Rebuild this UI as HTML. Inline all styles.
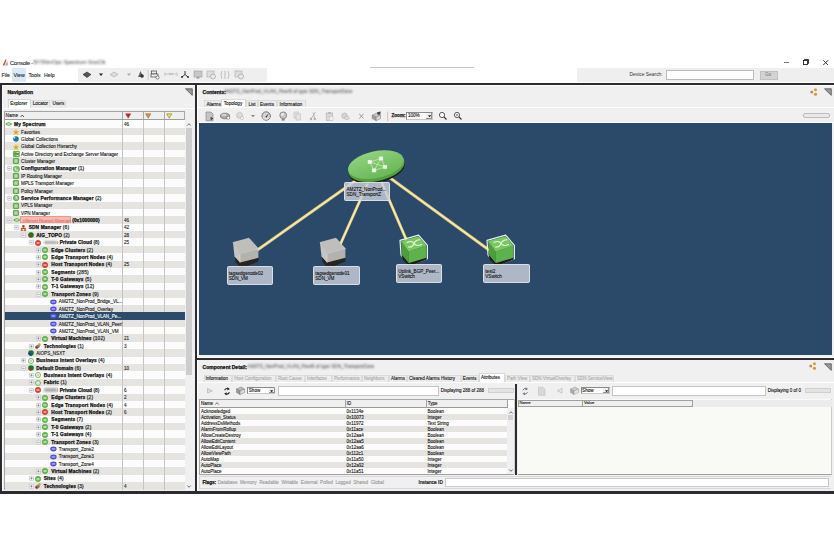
<!DOCTYPE html><html><head><meta charset="utf-8"><style>
html,body{margin:0;padding:0;width:834px;height:552px;overflow:hidden;background:#fff;}
body{position:relative;font-family:"Liberation Sans",sans-serif;color:#111;}
div{position:absolute;box-sizing:border-box;}
.t{white-space:nowrap;line-height:1;-webkit-text-stroke:0.1px currentColor;}
.t[style*="bold"]{-webkit-text-stroke:0.25px currentColor;}
.b{font-weight:bold;}
svg{position:absolute;overflow:visible;}
</style></head><body>
<svg style="left:2px;top:58.8px" width="7" height="8"><path d="M0.6 6.6 L3.4 0.4 L4.6 0.6 L2.4 6.6Z" fill="#c05a28"/><path d="M3 6.6 L5.2 1.6 L6.2 6.6Z" fill="#a8b0c8"/></svg>
<div class="t" style="left:9.8px;top:59.9px;font-size:6.2px;color:#333;letter-spacing:-0.4px">Console -</div>
<div class="t" style="left:33.5px;top:59.8px;font-size:5.4px;color:#666;filter:blur(0.9px)">BY5NmOpc Spectrum SnoClk</div>
<div style="left:784px;top:62px;width:5px;height:0.7px;background:#777"></div>
<svg style="left:803px;top:59px" width="6" height="6"><rect x="0.5" y="1.5" width="4" height="4" fill="none" stroke="#222" stroke-width="0.9"/><path d="M1.5 1.5 V0.5 H5.5 V4.5 H4.5" fill="none" stroke="#222" stroke-width="0.9"/></svg>
<svg style="left:823px;top:59.5px" width="6" height="6"><path d="M0.3 0.3 L5 5 M5 0.3 L0.3 5" stroke="#222" stroke-width="0.9"/></svg>
<div style="left:12px;top:68px;width:13.5px;height:14px;background:#d8eaf9"></div>
<div class="t" style="left:1.5px;top:73px;font-size:5.2px;color:#222">File</div>
<div class="t" style="left:13.5px;top:73px;font-size:5.2px;color:#222">View</div>
<div class="t" style="left:28.5px;top:73px;font-size:5.2px;color:#222">Tools</div>
<div class="t" style="left:44px;top:73px;font-size:5.2px;color:#222">Help</div>
<div style="left:78px;top:67.5px;width:189px;height:14px;background:#efefef"></div>
<svg style="left:0;top:0" width="834" height="90">
<path d="M83 74.5 L87 72 L91 74.5 L87 77.5Z" fill="#555" stroke="#333" stroke-width="0.6"/>
<path d="M99 73.5 H103 L101 76Z" fill="#222"/>
<path d="M110 74.5 L114 72 L118 74.5 L114 77Z" fill="#ddd" stroke="#aaa" stroke-width="0.6"/>
<path d="M127 73.5 H131 L129 76Z" fill="#aaa"/>
<path d="M138 77 L140.5 71 L143.5 77Z" fill="#666"/><circle cx="142" cy="76" r="1.8" fill="#333"/>
<rect x="147.8" y="70" width="0.7" height="10" fill="#bbb"/>
<rect x="151.5" y="71" width="5" height="3" fill="none" stroke="#444" stroke-width="0.7"/><rect x="151" y="74" width="7" height="3" fill="#eee" stroke="#444" stroke-width="0.7"/><circle cx="157.5" cy="77.5" r="1.6" fill="#fff" stroke="#444" stroke-width="0.6"/>
<path d="M165 74 H177 M165 72.5 V76 M177 72.5 V76 M169 73 L173 75 M169 75 L173 73" stroke="#bbb" stroke-width="0.8"/>
<path d="M185 71 V74.5 L182 77 M185 74.5 L188 77" stroke="#222" stroke-width="0.9" fill="none"/><circle cx="182" cy="77" r="0.9" fill="#222"/><circle cx="188" cy="77" r="0.9" fill="#222"/>
<rect x="194" y="71" width="8" height="6" fill="#c8c8c8" stroke="#999" stroke-width="0.6"/><rect x="196.5" y="77" width="3" height="1.5" fill="#999"/>
<rect x="207" y="71" width="7" height="6" fill="#ddd" stroke="#aaa" stroke-width="0.6"/><circle cx="213" cy="76.5" r="2.5" fill="#e8e8e8" stroke="#999" stroke-width="0.6"/>
<path d="M222 71 Q220 75 222 79 M228 71 Q230 75 228 79 M225 71 V79" stroke="#aaa" stroke-width="0.7" fill="none"/>
<rect x="235" y="71" width="7" height="6" fill="#ddd" stroke="#aaa" stroke-width="0.6"/><circle cx="241" cy="76.5" r="2.5" fill="#e8e8e8" stroke="#999" stroke-width="0.6"/>
</svg>
<div style="left:370px;top:67px;width:104px;height:1px;background:#c8c8c8"></div>
<div style="left:577px;top:67.5px;width:257px;height:14.5px;background:#efefef"></div>
<div class="t" style="left:629.5px;top:73px;font-size:4.9px;color:#333;-webkit-text-stroke:0">Device Search:</div>
<div style="left:665.8px;top:70px;width:88px;height:10.3px;background:#fff;border:0.7px solid #bbb"></div>
<div style="left:759.7px;top:71.2px;width:18.2px;height:8.4px;background:#d3d3d3;border:0.7px solid #c0c0c0"></div>
<div class="t" style="left:765px;top:73.3px;font-size:4.6px;color:#888">Go</div>
<div style="left:0px;top:82.8px;width:834px;height:2px;background:#2c2c30"></div>
<div style="left:0px;top:82.8px;width:2px;height:411px;background:#2c2c30"></div>
<div style="left:0px;top:491px;width:834px;height:2.6px;background:#2c2c30"></div>
<div style="left:2px;top:84.8px;width:193px;height:406.2px;background:#f0f0f0"></div>
<div style="left:2px;top:84.8px;width:193px;height:1px;background:#fff"></div>
<div style="left:2px;top:84.8px;width:1px;height:406px;background:#fff"></div>
<div style="left:195px;top:82.8px;width:2px;height:411px;background:#2c2c30"></div>
<div style="left:197px;top:84.8px;width:637px;height:272px;background:#f0f0f0"></div>
<div style="left:197px;top:84.8px;width:637px;height:1px;background:#fff"></div>
<div style="left:197px;top:84.8px;width:1px;height:272px;background:#fff"></div>
<div style="left:197px;top:357.5px;width:637px;height:2.5px;background:#2c2c30"></div>
<div style="left:197px;top:360px;width:637px;height:131px;background:#f0f0f0"></div>
<div style="left:197px;top:360px;width:1px;height:131px;background:#fff"></div>
<div class="t" style="left:7.5px;top:90.2px;font-size:5px;font-weight:bold;color:#111">Navigation</div>
<svg style="left:185px;top:88px" width="8" height="8"><path d="M0.5 0.8 L7.3 0.8 L7.3 7.4Z" fill="#999" stroke="#555" stroke-width="0.8" stroke-linejoin="round"/></svg>
<div style="left:8px;top:98.7px;width:22.7px;height:9.4px;background:#fff;border:0.6px solid #d8d8d8;border-bottom:none"></div>
<div style="left:30.7px;top:99.5px;width:35.8px;height:8.3px;background:#ebebeb;border-top:0.6px solid #dedede;border-right:0.6px solid #dedede"></div>
<div style="left:49px;top:99.5px;width:0.6px;height:8.3px;background:#dedede"></div>
<div class="t" style="left:10.2px;top:101.8px;font-size:4.6px;">Explorer</div>
<div class="t" style="left:32.8px;top:102.3px;font-size:4.6px;">Locator</div>
<div class="t" style="left:52.4px;top:102.3px;font-size:4.6px;">Users</div>
<div style="left:3px;top:107.8px;width:192px;height:1px;background:#fff"></div>
<div style="left:4px;top:111px;width:181px;height:379px;background:#fcfcfc"></div>
<div style="left:4px;top:111px;width:189px;height:1px;background:#a4a4a4"></div>
<div style="left:192px;top:111px;width:1px;height:379px;background:#c8c8c8"></div>
<div style="left:4px;top:111px;width:1px;height:379px;background:#a4a4a4"></div>
<div style="left:5px;top:112px;width:180px;height:7px;background:#efefef"></div>
<div style="left:4px;top:119px;width:181px;height:1px;background:#9c9c9c"></div>
<div style="left:4px;top:489px;width:189px;height:1px;background:#b8b8b8"></div>
<div class="t" style="left:5.5px;top:114.2px;font-size:4.7px;">Name</div>
<svg style="left:19.5px;top:114px" width="5" height="4"><path d="M0.5 3 L2.2 1 L3.9 3" fill="none" stroke="#333" stroke-width="0.8"/></svg>
<div style="left:122px;top:112px;width:1px;height:7px;background:#a8a8a8"></div>
<div style="left:143px;top:112px;width:1px;height:7px;background:#a8a8a8"></div>
<div style="left:164px;top:112px;width:1px;height:7px;background:#a8a8a8"></div>
<div style="left:184px;top:112px;width:1px;height:7px;background:#a8a8a8"></div>
<svg style="left:124.6px;top:113.3px" width="7" height="6"><path d="M0.6 0.8 H5.8 L3.2 5.2Z" fill="#e01818" stroke="#7a5a40" stroke-width="0.5" stroke-linejoin="round"/></svg>
<svg style="left:145.2px;top:113.3px" width="7" height="6"><path d="M0.6 0.8 H5.8 L3.2 5.2Z" fill="#f09028" stroke="#7a5a40" stroke-width="0.5" stroke-linejoin="round"/></svg>
<svg style="left:166.2px;top:113.3px" width="7" height="6"><path d="M0.6 0.8 H5.8 L3.2 5.2Z" fill="#f0e830" stroke="#7a5a40" stroke-width="0.5" stroke-linejoin="round"/></svg>
<div style="left:4.8px;top:120.3px;width:180px;height:7.435px;background:#fcfcfc"></div>
<div style="left:122px;top:120.3px;width:1px;height:7.435px;background:#c4c4c4"></div>
<div style="left:143px;top:120.3px;width:1px;height:7.435px;background:#c4c4c4"></div>
<div style="left:164px;top:120.3px;width:1px;height:7.435px;background:#c4c4c4"></div>
<svg style="left:5px;top:121.39999999999999px" width="8" height="6"><path d="M0.2 3 Q3.7 -0.6 7.4 3 Q3.7 6.6 0.2 3Z" fill="#4aaa3a"/><ellipse cx="3.8" cy="3" rx="1.9" ry="1.1" fill="#b8e4a8"/></svg>
<div class="t" style="left:14px;top:123.0px;font-size:4.8px;font-weight:bold;letter-spacing:0.14px;color:#111;clip-path:inset(-4px 0 -4px -4px);width:108.3px">My Spectrum</div>
<div class="t" style="left:124px;top:123.0px;font-size:4.6px;color:#222">46</div>
<div style="left:4.8px;top:127.685px;width:180px;height:7.435px;background:#e5e4e0"></div>
<div style="left:122px;top:127.685px;width:1px;height:7.435px;background:#c4c4c4"></div>
<div style="left:143px;top:127.685px;width:1px;height:7.435px;background:#c4c4c4"></div>
<div style="left:164px;top:127.685px;width:1px;height:7.435px;background:#c4c4c4"></div>
<svg style="left:12.7px;top:128.785px" width="6" height="6"><path d="M3 0.2 L3.8 2.2 L5.8 2.3 L4.3 3.6 L4.8 5.8 L3 4.6 L1.2 5.8 L1.7 3.6 L0.2 2.3 L2.2 2.2Z" fill="#f4d020" stroke="#c09010" stroke-width="0.3"/><circle cx="3" cy="3.3" r="0.9" fill="#e07020"/></svg>
<div class="t" style="left:21.1px;top:130.535px;font-size:4.6px;color:#111;clip-path:inset(-4px 0 -4px -4px);width:101.19999999999999px">Favorites</div>
<div style="left:4.8px;top:135.07px;width:180px;height:7.435px;background:#fcfcfc"></div>
<div style="left:122px;top:135.07px;width:1px;height:7.435px;background:#c4c4c4"></div>
<div style="left:143px;top:135.07px;width:1px;height:7.435px;background:#c4c4c4"></div>
<div style="left:164px;top:135.07px;width:1px;height:7.435px;background:#c4c4c4"></div>
<svg style="left:12.7px;top:136.17px" width="6" height="6"><circle cx="3" cy="3" r="2.8" fill="#2a6ad0"/><path d="M1.6 1 Q3.6 0.6 4.6 2.2 Q5.4 4 3.8 5.4 Q3 3.6 1.8 3.4Z" fill="#1a8a3a"/><circle cx="1.6" cy="1.8" r="0.8" fill="#e8f0ff"/></svg>
<div class="t" style="left:21.1px;top:137.92px;font-size:4.6px;color:#111;clip-path:inset(-4px 0 -4px -4px);width:101.19999999999999px">Global Collections</div>
<div style="left:4.8px;top:142.45499999999998px;width:180px;height:7.435px;background:#e5e4e0"></div>
<div style="left:122px;top:142.45499999999998px;width:1px;height:7.435px;background:#c4c4c4"></div>
<div style="left:143px;top:142.45499999999998px;width:1px;height:7.435px;background:#c4c4c4"></div>
<div style="left:164px;top:142.45499999999998px;width:1px;height:7.435px;background:#c4c4c4"></div>
<svg style="left:12.7px;top:143.55499999999998px" width="6" height="6"><path d="M3 0.2 L3.8 2.2 L5.8 2.3 L4.3 3.6 L4.8 5.8 L3 4.6 L1.2 5.8 L1.7 3.6 L0.2 2.3 L2.2 2.2Z" fill="#f4d020" stroke="#c09010" stroke-width="0.3"/><circle cx="3" cy="3.3" r="0.9" fill="#e07020"/></svg>
<div class="t" style="left:21.1px;top:145.30499999999998px;font-size:4.6px;color:#111;clip-path:inset(-4px 0 -4px -4px);width:101.19999999999999px">Global Collection Hierarchy</div>
<div style="left:4.8px;top:149.84px;width:180px;height:7.435px;background:#fcfcfc"></div>
<div style="left:122px;top:149.84px;width:1px;height:7.435px;background:#c4c4c4"></div>
<div style="left:143px;top:149.84px;width:1px;height:7.435px;background:#c4c4c4"></div>
<div style="left:164px;top:149.84px;width:1px;height:7.435px;background:#c4c4c4"></div>
<svg style="left:12.7px;top:150.94px" width="7" height="6"><rect x="0.4" y="0.3" width="6" height="2.6" rx="0.5" fill="#6cbc58" stroke="#3a7a2a" stroke-width="0.5"/><rect x="0.4" y="3.1" width="6" height="2.6" rx="0.5" fill="#6cbc58" stroke="#3a7a2a" stroke-width="0.5"/><rect x="3.6" y="1.2" width="2" height="0.8" fill="#e8f8e0"/><rect x="3.6" y="4" width="2" height="0.8" fill="#e8f8e0"/></svg>
<div class="t" style="left:21.1px;top:152.69px;font-size:4.6px;color:#111;clip-path:inset(-4px 0 -4px -4px);width:101.19999999999999px">Active Directory and Exchange Server Manager</div>
<div style="left:4.8px;top:157.225px;width:180px;height:7.435px;background:#e5e4e0"></div>
<div style="left:122px;top:157.225px;width:1px;height:7.435px;background:#c4c4c4"></div>
<div style="left:143px;top:157.225px;width:1px;height:7.435px;background:#c4c4c4"></div>
<div style="left:164px;top:157.225px;width:1px;height:7.435px;background:#c4c4c4"></div>
<svg style="left:12.7px;top:158.325px" width="6" height="6"><rect x="0.4" y="0.4" width="5.2" height="5.2" rx="0.6" fill="#6cbc58" stroke="#3a7a2a" stroke-width="0.6"/><rect x="1.4" y="1.6" width="3.2" height="1" fill="#dff4d4"/><rect x="1.4" y="3.4" width="3.2" height="1" fill="#dff4d4"/></svg>
<div class="t" style="left:21.1px;top:160.075px;font-size:4.6px;color:#111;clip-path:inset(-4px 0 -4px -4px);width:101.19999999999999px">Cluster Manager</div>
<div style="left:4.8px;top:164.61px;width:180px;height:7.435px;background:#fcfcfc"></div>
<div style="left:122px;top:164.61px;width:1px;height:7.435px;background:#c4c4c4"></div>
<div style="left:143px;top:164.61px;width:1px;height:7.435px;background:#c4c4c4"></div>
<div style="left:164px;top:164.61px;width:1px;height:7.435px;background:#c4c4c4"></div>
<svg style="left:6.9px;top:166.31px" width="5" height="5"><rect x="0.35" y="0.35" width="4.2" height="4" rx="0.7" fill="#f7f7f9" stroke="#bcc0cc" stroke-width="0.7"/><path d="M1.35 2.35 H3.55" stroke="#666" stroke-width="0.6"/></svg>
<svg style="left:12.7px;top:165.71px" width="7" height="6"><rect x="0.4" y="0.4" width="6" height="5.2" rx="1.5" fill="#7cc86a" stroke="#3a8a2a" stroke-width="0.5"/><path d="M2 1.5 Q1.5 4.5 5 4.5" stroke="#e8f8e0" stroke-width="0.9" fill="none"/></svg>
<div class="t" style="left:21.1px;top:167.31px;font-size:4.8px;font-weight:bold;letter-spacing:0.14px;color:#111;clip-path:inset(-4px 0 -4px -4px);width:101.19999999999999px">Configuration Manager <span style="font-weight:normal;color:#333">(1)</span></div>
<div style="left:4.8px;top:171.995px;width:180px;height:7.435px;background:#e5e4e0"></div>
<div style="left:122px;top:171.995px;width:1px;height:7.435px;background:#c4c4c4"></div>
<div style="left:143px;top:171.995px;width:1px;height:7.435px;background:#c4c4c4"></div>
<div style="left:164px;top:171.995px;width:1px;height:7.435px;background:#c4c4c4"></div>
<svg style="left:12.7px;top:173.095px" width="6" height="6"><rect x="0.4" y="0.4" width="5.2" height="5.2" rx="0.6" fill="#6cbc58" stroke="#3a7a2a" stroke-width="0.6"/><rect x="1.4" y="1.6" width="3.2" height="1" fill="#dff4d4"/><rect x="1.4" y="3.4" width="3.2" height="1" fill="#dff4d4"/></svg>
<div class="t" style="left:21.1px;top:174.845px;font-size:4.6px;color:#111;clip-path:inset(-4px 0 -4px -4px);width:101.19999999999999px">IP Routing Manager</div>
<div style="left:4.8px;top:179.38px;width:180px;height:7.435px;background:#fcfcfc"></div>
<div style="left:122px;top:179.38px;width:1px;height:7.435px;background:#c4c4c4"></div>
<div style="left:143px;top:179.38px;width:1px;height:7.435px;background:#c4c4c4"></div>
<div style="left:164px;top:179.38px;width:1px;height:7.435px;background:#c4c4c4"></div>
<svg style="left:12.7px;top:180.48px" width="6" height="6"><rect x="0.4" y="0.4" width="5.2" height="5.2" rx="0.6" fill="#6cbc58" stroke="#3a7a2a" stroke-width="0.6"/><rect x="1.4" y="1.6" width="3.2" height="1" fill="#dff4d4"/><rect x="1.4" y="3.4" width="3.2" height="1" fill="#dff4d4"/></svg>
<div class="t" style="left:21.1px;top:182.23px;font-size:4.6px;color:#111;clip-path:inset(-4px 0 -4px -4px);width:101.19999999999999px">MPLS Transport Manager</div>
<div style="left:4.8px;top:186.765px;width:180px;height:7.435px;background:#e5e4e0"></div>
<div style="left:122px;top:186.765px;width:1px;height:7.435px;background:#c4c4c4"></div>
<div style="left:143px;top:186.765px;width:1px;height:7.435px;background:#c4c4c4"></div>
<div style="left:164px;top:186.765px;width:1px;height:7.435px;background:#c4c4c4"></div>
<svg style="left:12.7px;top:187.86499999999998px" width="6" height="6"><rect x="0.4" y="0.4" width="5.2" height="5.2" rx="0.6" fill="#6cbc58" stroke="#3a7a2a" stroke-width="0.6"/><rect x="1.4" y="1.6" width="3.2" height="1" fill="#dff4d4"/><rect x="1.4" y="3.4" width="3.2" height="1" fill="#dff4d4"/></svg>
<div class="t" style="left:21.1px;top:189.61499999999998px;font-size:4.6px;color:#111;clip-path:inset(-4px 0 -4px -4px);width:101.19999999999999px">Policy Manager</div>
<div style="left:4.8px;top:194.14999999999998px;width:180px;height:7.435px;background:#fcfcfc"></div>
<div style="left:122px;top:194.14999999999998px;width:1px;height:7.435px;background:#c4c4c4"></div>
<div style="left:143px;top:194.14999999999998px;width:1px;height:7.435px;background:#c4c4c4"></div>
<div style="left:164px;top:194.14999999999998px;width:1px;height:7.435px;background:#c4c4c4"></div>
<svg style="left:6.9px;top:195.84999999999997px" width="5" height="5"><rect x="0.35" y="0.35" width="4.2" height="4" rx="0.7" fill="#f7f7f9" stroke="#bcc0cc" stroke-width="0.7"/><path d="M1.35 2.35 H3.55" stroke="#666" stroke-width="0.6"/></svg>
<svg style="left:12.7px;top:195.24999999999997px" width="7" height="6"><circle cx="3.2" cy="3" r="2.8" fill="#7cc86a" stroke="#2a6a2a" stroke-width="0.5"/><path d="M3.2 1.2 V3 L4.5 4" stroke="#fff" stroke-width="0.7" fill="none"/></svg>
<div class="t" style="left:21.1px;top:196.84999999999997px;font-size:4.8px;font-weight:bold;letter-spacing:0.14px;color:#111;clip-path:inset(-4px 0 -4px -4px);width:101.19999999999999px">Service Performance Manager <span style="font-weight:normal;color:#333">(2)</span></div>
<div style="left:4.8px;top:201.535px;width:180px;height:7.435px;background:#e5e4e0"></div>
<div style="left:122px;top:201.535px;width:1px;height:7.435px;background:#c4c4c4"></div>
<div style="left:143px;top:201.535px;width:1px;height:7.435px;background:#c4c4c4"></div>
<div style="left:164px;top:201.535px;width:1px;height:7.435px;background:#c4c4c4"></div>
<svg style="left:12.7px;top:202.635px" width="6" height="6"><rect x="0.4" y="0.4" width="5.2" height="5.2" rx="0.6" fill="#6cbc58" stroke="#3a7a2a" stroke-width="0.6"/><rect x="1.4" y="1.6" width="3.2" height="1" fill="#dff4d4"/><rect x="1.4" y="3.4" width="3.2" height="1" fill="#dff4d4"/></svg>
<div class="t" style="left:21.1px;top:204.385px;font-size:4.6px;color:#111;clip-path:inset(-4px 0 -4px -4px);width:101.19999999999999px">VPLS Manager</div>
<div style="left:4.8px;top:208.92000000000002px;width:180px;height:7.435px;background:#fcfcfc"></div>
<div style="left:122px;top:208.92000000000002px;width:1px;height:7.435px;background:#c4c4c4"></div>
<div style="left:143px;top:208.92000000000002px;width:1px;height:7.435px;background:#c4c4c4"></div>
<div style="left:164px;top:208.92000000000002px;width:1px;height:7.435px;background:#c4c4c4"></div>
<svg style="left:12.7px;top:210.02px" width="6" height="6"><rect x="0.4" y="0.4" width="5.2" height="5.2" rx="0.6" fill="#6cbc58" stroke="#3a7a2a" stroke-width="0.6"/><rect x="1.4" y="1.6" width="3.2" height="1" fill="#dff4d4"/><rect x="1.4" y="3.4" width="3.2" height="1" fill="#dff4d4"/></svg>
<div class="t" style="left:21.1px;top:211.77px;font-size:4.6px;color:#111;clip-path:inset(-4px 0 -4px -4px);width:101.19999999999999px">VPN Manager</div>
<div style="left:4.8px;top:216.305px;width:180px;height:7.435px;background:#e5e4e0"></div>
<div style="left:122px;top:216.305px;width:1px;height:7.435px;background:#c4c4c4"></div>
<div style="left:143px;top:216.305px;width:1px;height:7.435px;background:#c4c4c4"></div>
<div style="left:164px;top:216.305px;width:1px;height:7.435px;background:#c4c4c4"></div>
<svg style="left:6.9px;top:218.005px" width="5" height="5"><rect x="0.35" y="0.35" width="4.2" height="4" rx="0.7" fill="#f7f7f9" stroke="#bcc0cc" stroke-width="0.7"/><path d="M1.35 2.35 H3.55" stroke="#666" stroke-width="0.6"/></svg>
<svg style="left:12.7px;top:217.405px" width="8" height="6"><path d="M0.2 3 Q3.7 -0.6 7.4 3 Q3.7 6.6 0.2 3Z" fill="#4aaa3a"/><ellipse cx="3.8" cy="3" rx="1.9" ry="1.1" fill="#b8e4a8"/></svg>
<div style="left:19.7px;top:216.005px;width:51.8px;height:6.6px;background:#f7bab2;border:0.6px solid #ee968c"></div>
<div class="t" style="left:23px;top:218.60500000000002px;font-size:4.4px;color:#e06a64;filter:blur(0.6px)">vServer Nsmsrt Kknmgrt</div>
<div class="t" style="left:72.3px;top:219.005px;font-size:4.8px;font-weight:bold;color:#111">(0x1000000)</div>
<div class="t" style="left:124px;top:219.005px;font-size:4.6px;color:#222">46</div>
<div style="left:4.8px;top:223.69px;width:180px;height:7.435px;background:#fcfcfc"></div>
<div style="left:122px;top:223.69px;width:1px;height:7.435px;background:#c4c4c4"></div>
<div style="left:143px;top:223.69px;width:1px;height:7.435px;background:#c4c4c4"></div>
<div style="left:164px;top:223.69px;width:1px;height:7.435px;background:#c4c4c4"></div>
<svg style="left:14.100000000000001px;top:225.39px" width="5" height="5"><rect x="0.35" y="0.35" width="4.2" height="4" rx="0.7" fill="#f7f7f9" stroke="#bcc0cc" stroke-width="0.7"/><path d="M1.35 2.35 H3.55" stroke="#666" stroke-width="0.6"/></svg>
<svg style="left:20.1px;top:224.79px" width="7" height="7"><circle cx="3.4" cy="1.3" r="1.2" fill="#a83818"/><path d="M1.6 4 Q2 2.2 3.4 2.4 Q4.8 2.2 5.2 4Z" fill="#b84a28"/><circle cx="1.8" cy="3.8" r="1.1" fill="#c05030"/><circle cx="5" cy="3.8" r="1.1" fill="#c05030"/><path d="M0.2 6.4 Q0.4 4.6 1.8 4.8 Q3.2 4.6 3.4 6.4Z M3.4 6.4 Q3.6 4.6 5 4.8 Q6.4 4.6 6.6 6.4Z" fill="#c86040"/></svg>
<div class="t" style="left:28.650000000000002px;top:226.39px;font-size:4.8px;font-weight:bold;letter-spacing:0.14px;color:#111;clip-path:inset(-4px 0 -4px -4px);width:93.64999999999999px">SDN Manager <span style="font-weight:normal;color:#333">(6)</span></div>
<div class="t" style="left:124px;top:226.39px;font-size:4.6px;color:#222">42</div>
<div style="left:4.8px;top:231.075px;width:180px;height:7.435px;background:#e5e4e0"></div>
<div style="left:122px;top:231.075px;width:1px;height:7.435px;background:#c4c4c4"></div>
<div style="left:143px;top:231.075px;width:1px;height:7.435px;background:#c4c4c4"></div>
<div style="left:164px;top:231.075px;width:1px;height:7.435px;background:#c4c4c4"></div>
<svg style="left:21.3px;top:232.77499999999998px" width="5" height="5"><rect x="0.35" y="0.35" width="4.2" height="4" rx="0.7" fill="#f7f7f9" stroke="#bcc0cc" stroke-width="0.7"/><path d="M1.35 2.35 H3.55" stroke="#666" stroke-width="0.6"/></svg>
<svg style="left:27.5px;top:232.17499999999998px" width="6" height="6"><circle cx="3" cy="3" r="2.8" fill="#127a22"/><path d="M0.4 3.2 A2.8 2.8 0 0 0 3 5.8 L3 3.6 Q1.8 2.6 0.4 3.2Z" fill="#d02020"/></svg>
<div class="t" style="left:36.2px;top:233.77499999999998px;font-size:4.8px;font-weight:bold;letter-spacing:0.14px;color:#111;clip-path:inset(-4px 0 -4px -4px);width:86.1px">AIG_TOPO <span style="font-weight:normal;color:#333">(2)</span></div>
<div class="t" style="left:124px;top:233.77499999999998px;font-size:4.6px;color:#222">28</div>
<div style="left:4.8px;top:238.45999999999998px;width:180px;height:7.435px;background:#fcfcfc"></div>
<div style="left:122px;top:238.45999999999998px;width:1px;height:7.435px;background:#c4c4c4"></div>
<div style="left:143px;top:238.45999999999998px;width:1px;height:7.435px;background:#c4c4c4"></div>
<div style="left:164px;top:238.45999999999998px;width:1px;height:7.435px;background:#c4c4c4"></div>
<svg style="left:28.5px;top:240.15999999999997px" width="5" height="5"><rect x="0.35" y="0.35" width="4.2" height="4" rx="0.7" fill="#f7f7f9" stroke="#bcc0cc" stroke-width="0.7"/><path d="M1.35 2.35 H3.55" stroke="#666" stroke-width="0.6"/></svg>
<svg style="left:34.900000000000006px;top:239.55999999999997px" width="6" height="6"><circle cx="3" cy="3" r="2.75" fill="#e0402e" stroke="#b02818" stroke-width="0.4"/><rect x="1.5" y="2.45" width="3" height="1.1" fill="#fbe0d8"/></svg>
<div style="left:44.25px;top:240.65999999999997px;width:12.5px;height:3.8px;background:#a8a8a8;filter:blur(1px);border-radius:1px"></div>
<div style="left:56.95px;top:240.65999999999997px;width:1.2px;height:3.6px;background:#b0b0b0;filter:blur(0.4px)"></div>
<div class="t" style="left:59.75px;top:241.15999999999997px;font-size:4.8px;font-weight:bold;letter-spacing:0.1px;color:#111">Private Cloud <span style="font-weight:normal;color:#333">(8)</span></div>
<div class="t" style="left:124px;top:241.15999999999997px;font-size:4.6px;color:#222">25</div>
<div style="left:4.8px;top:245.845px;width:180px;height:7.435px;background:#e5e4e0"></div>
<div style="left:122px;top:245.845px;width:1px;height:7.435px;background:#c4c4c4"></div>
<div style="left:143px;top:245.845px;width:1px;height:7.435px;background:#c4c4c4"></div>
<div style="left:164px;top:245.845px;width:1px;height:7.435px;background:#c4c4c4"></div>
<svg style="left:35.7px;top:247.545px" width="5" height="5"><rect x="0.35" y="0.35" width="4.2" height="4" rx="0.7" fill="#f7f7f9" stroke="#bcc0cc" stroke-width="0.7"/><path d="M1.35 2.35 H3.55" stroke="#666" stroke-width="0.6"/><path d="M2.45 1.25 V3.45" stroke="#666" stroke-width="0.6"/></svg>
<svg style="left:42.3px;top:246.945px" width="6" height="6"><circle cx="3" cy="3" r="2.75" fill="#62bc4e" stroke="#3a8a2a" stroke-width="0.4"/><rect x="1.5" y="2.45" width="3" height="1.1" fill="#eafbe0"/></svg>
<div class="t" style="left:51.3px;top:248.545px;font-size:4.8px;font-weight:bold;letter-spacing:0.14px;color:#111;clip-path:inset(-4px 0 -4px -4px);width:71.0px">Edge Clusters <span style="font-weight:normal;color:#333">(2)</span></div>
<div style="left:4.8px;top:253.23000000000002px;width:180px;height:7.435px;background:#fcfcfc"></div>
<div style="left:122px;top:253.23000000000002px;width:1px;height:7.435px;background:#c4c4c4"></div>
<div style="left:143px;top:253.23000000000002px;width:1px;height:7.435px;background:#c4c4c4"></div>
<div style="left:164px;top:253.23000000000002px;width:1px;height:7.435px;background:#c4c4c4"></div>
<svg style="left:35.7px;top:254.93px" width="5" height="5"><rect x="0.35" y="0.35" width="4.2" height="4" rx="0.7" fill="#f7f7f9" stroke="#bcc0cc" stroke-width="0.7"/><path d="M1.35 2.35 H3.55" stroke="#666" stroke-width="0.6"/><path d="M2.45 1.25 V3.45" stroke="#666" stroke-width="0.6"/></svg>
<svg style="left:42.3px;top:254.33px" width="6" height="6"><circle cx="3" cy="3" r="2.75" fill="#62bc4e" stroke="#3a8a2a" stroke-width="0.4"/><rect x="1.5" y="2.45" width="3" height="1.1" fill="#eafbe0"/></svg>
<div class="t" style="left:51.3px;top:255.93px;font-size:4.8px;font-weight:bold;letter-spacing:0.14px;color:#111;clip-path:inset(-4px 0 -4px -4px);width:71.0px">Edge Transport Nodes <span style="font-weight:normal;color:#333">(4)</span></div>
<div style="left:4.8px;top:260.615px;width:180px;height:7.435px;background:#e5e4e0"></div>
<div style="left:122px;top:260.615px;width:1px;height:7.435px;background:#c4c4c4"></div>
<div style="left:143px;top:260.615px;width:1px;height:7.435px;background:#c4c4c4"></div>
<div style="left:164px;top:260.615px;width:1px;height:7.435px;background:#c4c4c4"></div>
<svg style="left:35.7px;top:262.315px" width="5" height="5"><rect x="0.35" y="0.35" width="4.2" height="4" rx="0.7" fill="#f7f7f9" stroke="#bcc0cc" stroke-width="0.7"/><path d="M1.35 2.35 H3.55" stroke="#666" stroke-width="0.6"/><path d="M2.45 1.25 V3.45" stroke="#666" stroke-width="0.6"/></svg>
<svg style="left:42.3px;top:261.71500000000003px" width="6" height="6"><circle cx="3" cy="3" r="2.75" fill="#e0402e" stroke="#b02818" stroke-width="0.4"/><rect x="1.5" y="2.45" width="3" height="1.1" fill="#fbe0d8"/></svg>
<div class="t" style="left:51.3px;top:263.315px;font-size:4.8px;font-weight:bold;letter-spacing:0.14px;color:#111;clip-path:inset(-4px 0 -4px -4px);width:71.0px">Host Transport Nodes <span style="font-weight:normal;color:#333">(4)</span></div>
<div class="t" style="left:124px;top:263.315px;font-size:4.6px;color:#222">25</div>
<div style="left:4.8px;top:268.0px;width:180px;height:7.435px;background:#fcfcfc"></div>
<div style="left:122px;top:268.0px;width:1px;height:7.435px;background:#c4c4c4"></div>
<div style="left:143px;top:268.0px;width:1px;height:7.435px;background:#c4c4c4"></div>
<div style="left:164px;top:268.0px;width:1px;height:7.435px;background:#c4c4c4"></div>
<svg style="left:35.7px;top:269.7px" width="5" height="5"><rect x="0.35" y="0.35" width="4.2" height="4" rx="0.7" fill="#f7f7f9" stroke="#bcc0cc" stroke-width="0.7"/><path d="M1.35 2.35 H3.55" stroke="#666" stroke-width="0.6"/><path d="M2.45 1.25 V3.45" stroke="#666" stroke-width="0.6"/></svg>
<svg style="left:42.3px;top:269.1px" width="6" height="6"><circle cx="3" cy="3" r="2.75" fill="#62bc4e" stroke="#3a8a2a" stroke-width="0.4"/><rect x="1.5" y="2.45" width="3" height="1.1" fill="#eafbe0"/></svg>
<div class="t" style="left:51.3px;top:270.7px;font-size:4.8px;font-weight:bold;letter-spacing:0.14px;color:#111;clip-path:inset(-4px 0 -4px -4px);width:71.0px">Segments <span style="font-weight:normal;color:#333">(285)</span></div>
<div style="left:4.8px;top:275.385px;width:180px;height:7.435px;background:#e5e4e0"></div>
<div style="left:122px;top:275.385px;width:1px;height:7.435px;background:#c4c4c4"></div>
<div style="left:143px;top:275.385px;width:1px;height:7.435px;background:#c4c4c4"></div>
<div style="left:164px;top:275.385px;width:1px;height:7.435px;background:#c4c4c4"></div>
<svg style="left:35.7px;top:277.085px" width="5" height="5"><rect x="0.35" y="0.35" width="4.2" height="4" rx="0.7" fill="#f7f7f9" stroke="#bcc0cc" stroke-width="0.7"/><path d="M1.35 2.35 H3.55" stroke="#666" stroke-width="0.6"/><path d="M2.45 1.25 V3.45" stroke="#666" stroke-width="0.6"/></svg>
<svg style="left:42.3px;top:276.485px" width="6" height="6"><circle cx="3" cy="3" r="2.75" fill="#62bc4e" stroke="#3a8a2a" stroke-width="0.4"/><rect x="1.5" y="2.45" width="3" height="1.1" fill="#eafbe0"/></svg>
<div class="t" style="left:51.3px;top:278.085px;font-size:4.8px;font-weight:bold;letter-spacing:0.14px;color:#111;clip-path:inset(-4px 0 -4px -4px);width:71.0px">T-0 Gateways <span style="font-weight:normal;color:#333">(5)</span></div>
<div style="left:4.8px;top:282.77px;width:180px;height:7.435px;background:#fcfcfc"></div>
<div style="left:122px;top:282.77px;width:1px;height:7.435px;background:#c4c4c4"></div>
<div style="left:143px;top:282.77px;width:1px;height:7.435px;background:#c4c4c4"></div>
<div style="left:164px;top:282.77px;width:1px;height:7.435px;background:#c4c4c4"></div>
<svg style="left:35.7px;top:284.46999999999997px" width="5" height="5"><rect x="0.35" y="0.35" width="4.2" height="4" rx="0.7" fill="#f7f7f9" stroke="#bcc0cc" stroke-width="0.7"/><path d="M1.35 2.35 H3.55" stroke="#666" stroke-width="0.6"/><path d="M2.45 1.25 V3.45" stroke="#666" stroke-width="0.6"/></svg>
<svg style="left:42.3px;top:283.87px" width="6" height="6"><circle cx="3" cy="3" r="2.75" fill="#62bc4e" stroke="#3a8a2a" stroke-width="0.4"/><rect x="1.5" y="2.45" width="3" height="1.1" fill="#eafbe0"/></svg>
<div class="t" style="left:51.3px;top:285.46999999999997px;font-size:4.8px;font-weight:bold;letter-spacing:0.14px;color:#111;clip-path:inset(-4px 0 -4px -4px);width:71.0px">T-1 Gateways <span style="font-weight:normal;color:#333">(12)</span></div>
<div style="left:4.8px;top:290.155px;width:180px;height:7.435px;background:#e5e4e0"></div>
<div style="left:122px;top:290.155px;width:1px;height:7.435px;background:#c4c4c4"></div>
<div style="left:143px;top:290.155px;width:1px;height:7.435px;background:#c4c4c4"></div>
<div style="left:164px;top:290.155px;width:1px;height:7.435px;background:#c4c4c4"></div>
<svg style="left:35.7px;top:291.85499999999996px" width="5" height="5"><rect x="0.35" y="0.35" width="4.2" height="4" rx="0.7" fill="#f7f7f9" stroke="#bcc0cc" stroke-width="0.7"/><path d="M1.35 2.35 H3.55" stroke="#666" stroke-width="0.6"/></svg>
<svg style="left:42.3px;top:291.255px" width="6" height="6"><circle cx="3" cy="3" r="2.75" fill="#62bc4e" stroke="#3a8a2a" stroke-width="0.4"/><rect x="1.5" y="2.45" width="3" height="1.1" fill="#eafbe0"/></svg>
<div class="t" style="left:51.3px;top:292.85499999999996px;font-size:4.8px;font-weight:bold;letter-spacing:0.14px;color:#111;clip-path:inset(-4px 0 -4px -4px);width:71.0px">Transport Zones <span style="font-weight:normal;color:#333">(9)</span></div>
<div style="left:4.8px;top:297.54px;width:180px;height:7.435px;background:#fcfcfc"></div>
<div style="left:122px;top:297.54px;width:1px;height:7.435px;background:#c4c4c4"></div>
<div style="left:143px;top:297.54px;width:1px;height:7.435px;background:#c4c4c4"></div>
<div style="left:164px;top:297.54px;width:1px;height:7.435px;background:#c4c4c4"></div>
<svg style="left:49.7px;top:298.64000000000004px" width="7" height="6"><ellipse cx="3.4" cy="3" rx="3.2" ry="2.4" fill="#5050d8"/><rect x="1.6" y="2.5" width="3.6" height="0.9" fill="#e0e0ff"/></svg>
<div class="t" style="left:58.85px;top:300.39px;font-size:4.6px;color:#111;clip-path:inset(-4px 0 -4px -4px);width:63.449999999999996px">AM2TZ_NonProd_Bridge_VL...</div>
<div style="left:4.8px;top:304.925px;width:180px;height:7.435px;background:#e5e4e0"></div>
<div style="left:122px;top:304.925px;width:1px;height:7.435px;background:#c4c4c4"></div>
<div style="left:143px;top:304.925px;width:1px;height:7.435px;background:#c4c4c4"></div>
<div style="left:164px;top:304.925px;width:1px;height:7.435px;background:#c4c4c4"></div>
<svg style="left:49.7px;top:306.02500000000003px" width="7" height="6"><ellipse cx="3.4" cy="3" rx="3.2" ry="2.4" fill="#5050d8"/><rect x="1.6" y="2.5" width="3.6" height="0.9" fill="#e0e0ff"/></svg>
<div class="t" style="left:58.85px;top:307.775px;font-size:4.6px;color:#111;clip-path:inset(-4px 0 -4px -4px);width:63.449999999999996px">AM2TZ_NonProd_Overlay</div>
<div style="left:4.8px;top:312.31px;width:180px;height:7.435px;background:#2d4b6d"></div>
<div style="left:122px;top:312.31px;width:1px;height:7.435px;background:#2d4b6d"></div>
<div style="left:143px;top:312.31px;width:1px;height:7.435px;background:#2d4b6d"></div>
<div style="left:164px;top:312.31px;width:1px;height:7.435px;background:#2d4b6d"></div>
<svg style="left:49.7px;top:313.41px" width="7" height="6"><ellipse cx="3.4" cy="3" rx="3.2" ry="2.4" fill="#5050d8"/><rect x="1.6" y="2.5" width="3.6" height="0.9" fill="#e0e0ff"/></svg>
<div class="t" style="left:58.85px;top:315.15999999999997px;font-size:4.6px;color:#fff;clip-path:inset(-4px 0 -4px -4px);width:63.449999999999996px">AM2TZ_NonProd_VLAN_Pe...</div>
<div style="left:4.8px;top:319.695px;width:180px;height:7.435px;background:#e5e4e0"></div>
<div style="left:122px;top:319.695px;width:1px;height:7.435px;background:#c4c4c4"></div>
<div style="left:143px;top:319.695px;width:1px;height:7.435px;background:#c4c4c4"></div>
<div style="left:164px;top:319.695px;width:1px;height:7.435px;background:#c4c4c4"></div>
<svg style="left:49.7px;top:320.795px" width="7" height="6"><ellipse cx="3.4" cy="3" rx="3.2" ry="2.4" fill="#5050d8"/><rect x="1.6" y="2.5" width="3.6" height="0.9" fill="#e0e0ff"/></svg>
<div class="t" style="left:58.85px;top:322.54499999999996px;font-size:4.6px;color:#111;clip-path:inset(-4px 0 -4px -4px);width:63.449999999999996px">AM2TZ_NonProd_VLAN_PeerB</div>
<div style="left:4.8px;top:327.08px;width:180px;height:7.435px;background:#fcfcfc"></div>
<div style="left:122px;top:327.08px;width:1px;height:7.435px;background:#c4c4c4"></div>
<div style="left:143px;top:327.08px;width:1px;height:7.435px;background:#c4c4c4"></div>
<div style="left:164px;top:327.08px;width:1px;height:7.435px;background:#c4c4c4"></div>
<svg style="left:49.7px;top:328.18px" width="7" height="6"><ellipse cx="3.4" cy="3" rx="3.2" ry="2.4" fill="#5050d8"/><rect x="1.6" y="2.5" width="3.6" height="0.9" fill="#e0e0ff"/></svg>
<div class="t" style="left:58.85px;top:329.92999999999995px;font-size:4.6px;color:#111;clip-path:inset(-4px 0 -4px -4px);width:63.449999999999996px">AM2TZ_NonProd_VLAN_VM</div>
<div style="left:4.8px;top:334.465px;width:180px;height:7.435px;background:#e5e4e0"></div>
<div style="left:122px;top:334.465px;width:1px;height:7.435px;background:#c4c4c4"></div>
<div style="left:143px;top:334.465px;width:1px;height:7.435px;background:#c4c4c4"></div>
<div style="left:164px;top:334.465px;width:1px;height:7.435px;background:#c4c4c4"></div>
<svg style="left:35.7px;top:336.16499999999996px" width="5" height="5"><rect x="0.35" y="0.35" width="4.2" height="4" rx="0.7" fill="#f7f7f9" stroke="#bcc0cc" stroke-width="0.7"/><path d="M1.35 2.35 H3.55" stroke="#666" stroke-width="0.6"/><path d="M2.45 1.25 V3.45" stroke="#666" stroke-width="0.6"/></svg>
<svg style="left:42.3px;top:335.565px" width="6" height="6"><circle cx="3" cy="3" r="2.75" fill="#62bc4e" stroke="#3a8a2a" stroke-width="0.4"/><rect x="1.5" y="2.45" width="3" height="1.1" fill="#eafbe0"/></svg>
<div class="t" style="left:51.3px;top:337.16499999999996px;font-size:4.8px;font-weight:bold;letter-spacing:0.14px;color:#111;clip-path:inset(-4px 0 -4px -4px);width:71.0px">Virtual Machines <span style="font-weight:normal;color:#333">(102)</span></div>
<div class="t" style="left:124px;top:337.16499999999996px;font-size:4.6px;color:#222">21</div>
<div style="left:4.8px;top:341.84999999999997px;width:180px;height:7.435px;background:#fcfcfc"></div>
<div style="left:122px;top:341.84999999999997px;width:1px;height:7.435px;background:#c4c4c4"></div>
<div style="left:143px;top:341.84999999999997px;width:1px;height:7.435px;background:#c4c4c4"></div>
<div style="left:164px;top:341.84999999999997px;width:1px;height:7.435px;background:#c4c4c4"></div>
<svg style="left:28.5px;top:343.54999999999995px" width="5" height="5"><rect x="0.35" y="0.35" width="4.2" height="4" rx="0.7" fill="#f7f7f9" stroke="#bcc0cc" stroke-width="0.7"/><path d="M1.35 2.35 H3.55" stroke="#666" stroke-width="0.6"/><path d="M2.45 1.25 V3.45" stroke="#666" stroke-width="0.6"/></svg>
<svg style="left:34.900000000000006px;top:342.95px" width="6" height="6"><circle cx="1.9" cy="4.2" r="1.6" fill="#c81818"/><circle cx="3.1" cy="2.9" r="1.5" fill="#40a838"/><circle cx="4.3" cy="1.7" r="1.4" fill="#f09828"/><circle cx="3.8" cy="3.6" r="1" fill="#4a90d8"/></svg>
<div class="t" style="left:43.75px;top:344.54999999999995px;font-size:4.8px;font-weight:bold;letter-spacing:0.14px;color:#111;clip-path:inset(-4px 0 -4px -4px);width:78.55px">Technologies <span style="font-weight:normal;color:#333">(1)</span></div>
<div class="t" style="left:124px;top:344.54999999999995px;font-size:4.6px;color:#222">3</div>
<div style="left:4.8px;top:349.235px;width:180px;height:7.435px;background:#e5e4e0"></div>
<div style="left:122px;top:349.235px;width:1px;height:7.435px;background:#c4c4c4"></div>
<div style="left:143px;top:349.235px;width:1px;height:7.435px;background:#c4c4c4"></div>
<div style="left:164px;top:349.235px;width:1px;height:7.435px;background:#c4c4c4"></div>
<svg style="left:27.5px;top:350.33500000000004px" width="6" height="6"><circle cx="3" cy="3" r="2.8" fill="#127a22"/><path d="M0.3 2.8 A2.8 2.8 0 0 0 4 5.7 Q3.5 3.4 0.3 2.8Z" fill="#1a2ad0"/></svg>
<div class="t" style="left:36.2px;top:352.085px;font-size:4.6px;color:#111;clip-path:inset(-4px 0 -4px -4px);width:86.1px">AIOPS_NSXT</div>
<div style="left:4.8px;top:356.62px;width:180px;height:7.435px;background:#fcfcfc"></div>
<div style="left:122px;top:356.62px;width:1px;height:7.435px;background:#c4c4c4"></div>
<div style="left:143px;top:356.62px;width:1px;height:7.435px;background:#c4c4c4"></div>
<div style="left:164px;top:356.62px;width:1px;height:7.435px;background:#c4c4c4"></div>
<svg style="left:21.3px;top:358.32px" width="5" height="5"><rect x="0.35" y="0.35" width="4.2" height="4" rx="0.7" fill="#f7f7f9" stroke="#bcc0cc" stroke-width="0.7"/><path d="M1.35 2.35 H3.55" stroke="#666" stroke-width="0.6"/><path d="M2.45 1.25 V3.45" stroke="#666" stroke-width="0.6"/></svg>
<svg style="left:27.5px;top:357.72px" width="6" height="6"><circle cx="3" cy="3" r="2.6" fill="#e8f4e0" stroke="#78b868" stroke-width="0.9"/><path d="M1.8 2 L4.2 4 M4.2 2 L1.8 4" stroke="#9ccc8c" stroke-width="0.6"/></svg>
<div class="t" style="left:36.2px;top:359.32px;font-size:4.8px;font-weight:bold;letter-spacing:0.14px;color:#111;clip-path:inset(-4px 0 -4px -4px);width:86.1px">Business Intent Overlays <span style="font-weight:normal;color:#333">(4)</span></div>
<div style="left:4.8px;top:364.005px;width:180px;height:7.435px;background:#e5e4e0"></div>
<div style="left:122px;top:364.005px;width:1px;height:7.435px;background:#c4c4c4"></div>
<div style="left:143px;top:364.005px;width:1px;height:7.435px;background:#c4c4c4"></div>
<div style="left:164px;top:364.005px;width:1px;height:7.435px;background:#c4c4c4"></div>
<svg style="left:21.3px;top:365.705px" width="5" height="5"><rect x="0.35" y="0.35" width="4.2" height="4" rx="0.7" fill="#f7f7f9" stroke="#bcc0cc" stroke-width="0.7"/><path d="M1.35 2.35 H3.55" stroke="#666" stroke-width="0.6"/></svg>
<svg style="left:27.5px;top:365.105px" width="6" height="6"><circle cx="3" cy="3" r="2.8" fill="#127a22"/><path d="M0.4 3.2 A2.8 2.8 0 0 0 3 5.8 L3 3.6 Q1.8 2.6 0.4 3.2Z" fill="#d02020"/></svg>
<div class="t" style="left:36.2px;top:366.705px;font-size:4.8px;font-weight:bold;letter-spacing:0.14px;color:#111;clip-path:inset(-4px 0 -4px -4px);width:86.1px">Default Domain <span style="font-weight:normal;color:#333">(6)</span></div>
<div class="t" style="left:124px;top:366.705px;font-size:4.6px;color:#222">10</div>
<div style="left:4.8px;top:371.39px;width:180px;height:7.435px;background:#fcfcfc"></div>
<div style="left:122px;top:371.39px;width:1px;height:7.435px;background:#c4c4c4"></div>
<div style="left:143px;top:371.39px;width:1px;height:7.435px;background:#c4c4c4"></div>
<div style="left:164px;top:371.39px;width:1px;height:7.435px;background:#c4c4c4"></div>
<svg style="left:28.5px;top:373.09px" width="5" height="5"><rect x="0.35" y="0.35" width="4.2" height="4" rx="0.7" fill="#f7f7f9" stroke="#bcc0cc" stroke-width="0.7"/><path d="M1.35 2.35 H3.55" stroke="#666" stroke-width="0.6"/><path d="M2.45 1.25 V3.45" stroke="#666" stroke-width="0.6"/></svg>
<svg style="left:34.900000000000006px;top:372.49px" width="6" height="6"><circle cx="3" cy="3" r="2.6" fill="#e8f4e0" stroke="#78b868" stroke-width="0.9"/><path d="M1.8 2 L4.2 4 M4.2 2 L1.8 4" stroke="#9ccc8c" stroke-width="0.6"/></svg>
<div class="t" style="left:43.75px;top:374.09px;font-size:4.8px;font-weight:bold;letter-spacing:0.14px;color:#111;clip-path:inset(-4px 0 -4px -4px);width:78.55px">Business Intent Overlays <span style="font-weight:normal;color:#333">(4)</span></div>
<div style="left:4.8px;top:378.775px;width:180px;height:7.435px;background:#e5e4e0"></div>
<div style="left:122px;top:378.775px;width:1px;height:7.435px;background:#c4c4c4"></div>
<div style="left:143px;top:378.775px;width:1px;height:7.435px;background:#c4c4c4"></div>
<div style="left:164px;top:378.775px;width:1px;height:7.435px;background:#c4c4c4"></div>
<svg style="left:28.5px;top:380.47499999999997px" width="5" height="5"><rect x="0.35" y="0.35" width="4.2" height="4" rx="0.7" fill="#f7f7f9" stroke="#bcc0cc" stroke-width="0.7"/><path d="M1.35 2.35 H3.55" stroke="#666" stroke-width="0.6"/><path d="M2.45 1.25 V3.45" stroke="#666" stroke-width="0.6"/></svg>
<svg style="left:34.900000000000006px;top:379.875px" width="6" height="6"><circle cx="3" cy="3" r="2.5" fill="none" stroke="#6ac050" stroke-width="1"/></svg>
<div class="t" style="left:43.75px;top:381.47499999999997px;font-size:4.8px;font-weight:bold;letter-spacing:0.14px;color:#111;clip-path:inset(-4px 0 -4px -4px);width:78.55px">Fabric <span style="font-weight:normal;color:#333">(1)</span></div>
<div style="left:4.8px;top:386.16px;width:180px;height:7.435px;background:#fcfcfc"></div>
<div style="left:122px;top:386.16px;width:1px;height:7.435px;background:#c4c4c4"></div>
<div style="left:143px;top:386.16px;width:1px;height:7.435px;background:#c4c4c4"></div>
<div style="left:164px;top:386.16px;width:1px;height:7.435px;background:#c4c4c4"></div>
<svg style="left:28.5px;top:387.86px" width="5" height="5"><rect x="0.35" y="0.35" width="4.2" height="4" rx="0.7" fill="#f7f7f9" stroke="#bcc0cc" stroke-width="0.7"/><path d="M1.35 2.35 H3.55" stroke="#666" stroke-width="0.6"/></svg>
<svg style="left:34.900000000000006px;top:387.26000000000005px" width="6" height="6"><circle cx="3" cy="3" r="2.75" fill="#e0402e" stroke="#b02818" stroke-width="0.4"/><rect x="1.5" y="2.45" width="3" height="1.1" fill="#fbe0d8"/></svg>
<div style="left:44.25px;top:388.36px;width:12.5px;height:3.8px;background:#a8a8a8;filter:blur(1px);border-radius:1px"></div>
<div style="left:56.95px;top:388.36px;width:1.2px;height:3.6px;background:#b0b0b0;filter:blur(0.4px)"></div>
<div class="t" style="left:59.75px;top:388.86px;font-size:4.8px;font-weight:bold;letter-spacing:0.1px;color:#111">Private Cloud <span style="font-weight:normal;color:#333">(8)</span></div>
<div class="t" style="left:124px;top:388.86px;font-size:4.6px;color:#222">6</div>
<div style="left:4.8px;top:393.545px;width:180px;height:7.435px;background:#e5e4e0"></div>
<div style="left:122px;top:393.545px;width:1px;height:7.435px;background:#c4c4c4"></div>
<div style="left:143px;top:393.545px;width:1px;height:7.435px;background:#c4c4c4"></div>
<div style="left:164px;top:393.545px;width:1px;height:7.435px;background:#c4c4c4"></div>
<svg style="left:35.7px;top:395.245px" width="5" height="5"><rect x="0.35" y="0.35" width="4.2" height="4" rx="0.7" fill="#f7f7f9" stroke="#bcc0cc" stroke-width="0.7"/><path d="M1.35 2.35 H3.55" stroke="#666" stroke-width="0.6"/><path d="M2.45 1.25 V3.45" stroke="#666" stroke-width="0.6"/></svg>
<svg style="left:42.3px;top:394.64500000000004px" width="6" height="6"><circle cx="3" cy="3" r="2.75" fill="#62bc4e" stroke="#3a8a2a" stroke-width="0.4"/><rect x="1.5" y="2.45" width="3" height="1.1" fill="#eafbe0"/></svg>
<div class="t" style="left:51.3px;top:396.245px;font-size:4.8px;font-weight:bold;letter-spacing:0.14px;color:#111;clip-path:inset(-4px 0 -4px -4px);width:71.0px">Edge Clusters <span style="font-weight:normal;color:#333">(2)</span></div>
<div class="t" style="left:124px;top:396.245px;font-size:4.6px;color:#222">2</div>
<div style="left:4.8px;top:400.93px;width:180px;height:7.435px;background:#fcfcfc"></div>
<div style="left:122px;top:400.93px;width:1px;height:7.435px;background:#c4c4c4"></div>
<div style="left:143px;top:400.93px;width:1px;height:7.435px;background:#c4c4c4"></div>
<div style="left:164px;top:400.93px;width:1px;height:7.435px;background:#c4c4c4"></div>
<svg style="left:35.7px;top:402.63px" width="5" height="5"><rect x="0.35" y="0.35" width="4.2" height="4" rx="0.7" fill="#f7f7f9" stroke="#bcc0cc" stroke-width="0.7"/><path d="M1.35 2.35 H3.55" stroke="#666" stroke-width="0.6"/><path d="M2.45 1.25 V3.45" stroke="#666" stroke-width="0.6"/></svg>
<svg style="left:42.3px;top:402.03000000000003px" width="6" height="6"><circle cx="3" cy="3" r="2.75" fill="#62bc4e" stroke="#3a8a2a" stroke-width="0.4"/><rect x="1.5" y="2.45" width="3" height="1.1" fill="#eafbe0"/></svg>
<div class="t" style="left:51.3px;top:403.63px;font-size:4.8px;font-weight:bold;letter-spacing:0.14px;color:#111;clip-path:inset(-4px 0 -4px -4px);width:71.0px">Edge Transport Nodes <span style="font-weight:normal;color:#333">(4)</span></div>
<div class="t" style="left:124px;top:403.63px;font-size:4.6px;color:#222">4</div>
<div style="left:4.8px;top:408.315px;width:180px;height:7.435px;background:#e5e4e0"></div>
<div style="left:122px;top:408.315px;width:1px;height:7.435px;background:#c4c4c4"></div>
<div style="left:143px;top:408.315px;width:1px;height:7.435px;background:#c4c4c4"></div>
<div style="left:164px;top:408.315px;width:1px;height:7.435px;background:#c4c4c4"></div>
<svg style="left:35.7px;top:410.015px" width="5" height="5"><rect x="0.35" y="0.35" width="4.2" height="4" rx="0.7" fill="#f7f7f9" stroke="#bcc0cc" stroke-width="0.7"/><path d="M1.35 2.35 H3.55" stroke="#666" stroke-width="0.6"/><path d="M2.45 1.25 V3.45" stroke="#666" stroke-width="0.6"/></svg>
<svg style="left:42.3px;top:409.415px" width="6" height="6"><circle cx="3" cy="3" r="2.75" fill="#e0402e" stroke="#b02818" stroke-width="0.4"/><rect x="1.5" y="2.45" width="3" height="1.1" fill="#fbe0d8"/></svg>
<div class="t" style="left:51.3px;top:411.015px;font-size:4.8px;font-weight:bold;letter-spacing:0.14px;color:#111;clip-path:inset(-4px 0 -4px -4px);width:71.0px">Host Transport Nodes <span style="font-weight:normal;color:#333">(2)</span></div>
<div class="t" style="left:124px;top:411.015px;font-size:4.6px;color:#222">6</div>
<div style="left:4.8px;top:415.7px;width:180px;height:7.435px;background:#fcfcfc"></div>
<div style="left:122px;top:415.7px;width:1px;height:7.435px;background:#c4c4c4"></div>
<div style="left:143px;top:415.7px;width:1px;height:7.435px;background:#c4c4c4"></div>
<div style="left:164px;top:415.7px;width:1px;height:7.435px;background:#c4c4c4"></div>
<svg style="left:35.7px;top:417.4px" width="5" height="5"><rect x="0.35" y="0.35" width="4.2" height="4" rx="0.7" fill="#f7f7f9" stroke="#bcc0cc" stroke-width="0.7"/><path d="M1.35 2.35 H3.55" stroke="#666" stroke-width="0.6"/><path d="M2.45 1.25 V3.45" stroke="#666" stroke-width="0.6"/></svg>
<svg style="left:42.3px;top:416.8px" width="6" height="6"><circle cx="3" cy="3" r="2.75" fill="#62bc4e" stroke="#3a8a2a" stroke-width="0.4"/><rect x="1.5" y="2.45" width="3" height="1.1" fill="#eafbe0"/></svg>
<div class="t" style="left:51.3px;top:418.4px;font-size:4.8px;font-weight:bold;letter-spacing:0.14px;color:#111;clip-path:inset(-4px 0 -4px -4px);width:71.0px">Segments <span style="font-weight:normal;color:#333">(7)</span></div>
<div style="left:4.8px;top:423.085px;width:180px;height:7.435px;background:#e5e4e0"></div>
<div style="left:122px;top:423.085px;width:1px;height:7.435px;background:#c4c4c4"></div>
<div style="left:143px;top:423.085px;width:1px;height:7.435px;background:#c4c4c4"></div>
<div style="left:164px;top:423.085px;width:1px;height:7.435px;background:#c4c4c4"></div>
<svg style="left:35.7px;top:424.78499999999997px" width="5" height="5"><rect x="0.35" y="0.35" width="4.2" height="4" rx="0.7" fill="#f7f7f9" stroke="#bcc0cc" stroke-width="0.7"/><path d="M1.35 2.35 H3.55" stroke="#666" stroke-width="0.6"/><path d="M2.45 1.25 V3.45" stroke="#666" stroke-width="0.6"/></svg>
<svg style="left:42.3px;top:424.185px" width="6" height="6"><circle cx="3" cy="3" r="2.75" fill="#62bc4e" stroke="#3a8a2a" stroke-width="0.4"/><rect x="1.5" y="2.45" width="3" height="1.1" fill="#eafbe0"/></svg>
<div class="t" style="left:51.3px;top:425.78499999999997px;font-size:4.8px;font-weight:bold;letter-spacing:0.14px;color:#111;clip-path:inset(-4px 0 -4px -4px);width:71.0px">T-0 Gateways <span style="font-weight:normal;color:#333">(2)</span></div>
<div style="left:4.8px;top:430.47px;width:180px;height:7.435px;background:#fcfcfc"></div>
<div style="left:122px;top:430.47px;width:1px;height:7.435px;background:#c4c4c4"></div>
<div style="left:143px;top:430.47px;width:1px;height:7.435px;background:#c4c4c4"></div>
<div style="left:164px;top:430.47px;width:1px;height:7.435px;background:#c4c4c4"></div>
<svg style="left:35.7px;top:432.17px" width="5" height="5"><rect x="0.35" y="0.35" width="4.2" height="4" rx="0.7" fill="#f7f7f9" stroke="#bcc0cc" stroke-width="0.7"/><path d="M1.35 2.35 H3.55" stroke="#666" stroke-width="0.6"/><path d="M2.45 1.25 V3.45" stroke="#666" stroke-width="0.6"/></svg>
<svg style="left:42.3px;top:431.57000000000005px" width="6" height="6"><circle cx="3" cy="3" r="2.75" fill="#62bc4e" stroke="#3a8a2a" stroke-width="0.4"/><rect x="1.5" y="2.45" width="3" height="1.1" fill="#eafbe0"/></svg>
<div class="t" style="left:51.3px;top:433.17px;font-size:4.8px;font-weight:bold;letter-spacing:0.14px;color:#111;clip-path:inset(-4px 0 -4px -4px);width:71.0px">T-1 Gateways <span style="font-weight:normal;color:#333">(4)</span></div>
<div style="left:4.8px;top:437.855px;width:180px;height:7.435px;background:#e5e4e0"></div>
<div style="left:122px;top:437.855px;width:1px;height:7.435px;background:#c4c4c4"></div>
<div style="left:143px;top:437.855px;width:1px;height:7.435px;background:#c4c4c4"></div>
<div style="left:164px;top:437.855px;width:1px;height:7.435px;background:#c4c4c4"></div>
<svg style="left:35.7px;top:439.555px" width="5" height="5"><rect x="0.35" y="0.35" width="4.2" height="4" rx="0.7" fill="#f7f7f9" stroke="#bcc0cc" stroke-width="0.7"/><path d="M1.35 2.35 H3.55" stroke="#666" stroke-width="0.6"/></svg>
<svg style="left:42.3px;top:438.95500000000004px" width="6" height="6"><circle cx="3" cy="3" r="2.75" fill="#62bc4e" stroke="#3a8a2a" stroke-width="0.4"/><rect x="1.5" y="2.45" width="3" height="1.1" fill="#eafbe0"/></svg>
<div class="t" style="left:51.3px;top:440.555px;font-size:4.8px;font-weight:bold;letter-spacing:0.14px;color:#111;clip-path:inset(-4px 0 -4px -4px);width:71.0px">Transport Zones <span style="font-weight:normal;color:#333">(3)</span></div>
<div style="left:4.8px;top:445.24px;width:180px;height:7.435px;background:#fcfcfc"></div>
<div style="left:122px;top:445.24px;width:1px;height:7.435px;background:#c4c4c4"></div>
<div style="left:143px;top:445.24px;width:1px;height:7.435px;background:#c4c4c4"></div>
<div style="left:164px;top:445.24px;width:1px;height:7.435px;background:#c4c4c4"></div>
<svg style="left:49.7px;top:446.34000000000003px" width="7" height="6"><ellipse cx="3.4" cy="3" rx="3.2" ry="2.4" fill="#5050d8"/><rect x="1.6" y="2.5" width="3.6" height="0.9" fill="#e0e0ff"/></svg>
<div class="t" style="left:58.85px;top:448.09px;font-size:4.6px;color:#111;clip-path:inset(-4px 0 -4px -4px);width:63.449999999999996px">Transport_Zone2</div>
<div style="left:4.8px;top:452.625px;width:180px;height:7.435px;background:#e5e4e0"></div>
<div style="left:122px;top:452.625px;width:1px;height:7.435px;background:#c4c4c4"></div>
<div style="left:143px;top:452.625px;width:1px;height:7.435px;background:#c4c4c4"></div>
<div style="left:164px;top:452.625px;width:1px;height:7.435px;background:#c4c4c4"></div>
<svg style="left:49.7px;top:453.725px" width="7" height="6"><ellipse cx="3.4" cy="3" rx="3.2" ry="2.4" fill="#5050d8"/><rect x="1.6" y="2.5" width="3.6" height="0.9" fill="#e0e0ff"/></svg>
<div class="t" style="left:58.85px;top:455.47499999999997px;font-size:4.6px;color:#111;clip-path:inset(-4px 0 -4px -4px);width:63.449999999999996px">Transport_Zone3</div>
<div style="left:4.8px;top:460.01px;width:180px;height:7.435px;background:#fcfcfc"></div>
<div style="left:122px;top:460.01px;width:1px;height:7.435px;background:#c4c4c4"></div>
<div style="left:143px;top:460.01px;width:1px;height:7.435px;background:#c4c4c4"></div>
<div style="left:164px;top:460.01px;width:1px;height:7.435px;background:#c4c4c4"></div>
<svg style="left:49.7px;top:461.11px" width="7" height="6"><ellipse cx="3.4" cy="3" rx="3.2" ry="2.4" fill="#5050d8"/><rect x="1.6" y="2.5" width="3.6" height="0.9" fill="#e0e0ff"/></svg>
<div class="t" style="left:58.85px;top:462.85999999999996px;font-size:4.6px;color:#111;clip-path:inset(-4px 0 -4px -4px);width:63.449999999999996px">Transport_Zone4</div>
<div style="left:4.8px;top:467.395px;width:180px;height:7.435px;background:#e5e4e0"></div>
<div style="left:122px;top:467.395px;width:1px;height:7.435px;background:#c4c4c4"></div>
<div style="left:143px;top:467.395px;width:1px;height:7.435px;background:#c4c4c4"></div>
<div style="left:164px;top:467.395px;width:1px;height:7.435px;background:#c4c4c4"></div>
<svg style="left:35.7px;top:469.09499999999997px" width="5" height="5"><rect x="0.35" y="0.35" width="4.2" height="4" rx="0.7" fill="#f7f7f9" stroke="#bcc0cc" stroke-width="0.7"/><path d="M1.35 2.35 H3.55" stroke="#666" stroke-width="0.6"/><path d="M2.45 1.25 V3.45" stroke="#666" stroke-width="0.6"/></svg>
<svg style="left:42.3px;top:468.495px" width="6" height="6"><circle cx="3" cy="3" r="2.75" fill="#62bc4e" stroke="#3a8a2a" stroke-width="0.4"/><rect x="1.5" y="2.45" width="3" height="1.1" fill="#eafbe0"/></svg>
<div class="t" style="left:51.3px;top:470.09499999999997px;font-size:4.8px;font-weight:bold;letter-spacing:0.14px;color:#111;clip-path:inset(-4px 0 -4px -4px);width:71.0px">Virtual Machines <span style="font-weight:normal;color:#333">(2)</span></div>
<div style="left:4.8px;top:474.78000000000003px;width:180px;height:7.435px;background:#fcfcfc"></div>
<div style="left:122px;top:474.78000000000003px;width:1px;height:7.435px;background:#c4c4c4"></div>
<div style="left:143px;top:474.78000000000003px;width:1px;height:7.435px;background:#c4c4c4"></div>
<div style="left:164px;top:474.78000000000003px;width:1px;height:7.435px;background:#c4c4c4"></div>
<svg style="left:28.5px;top:476.48px" width="5" height="5"><rect x="0.35" y="0.35" width="4.2" height="4" rx="0.7" fill="#f7f7f9" stroke="#bcc0cc" stroke-width="0.7"/><path d="M1.35 2.35 H3.55" stroke="#666" stroke-width="0.6"/><path d="M2.45 1.25 V3.45" stroke="#666" stroke-width="0.6"/></svg>
<svg style="left:34.900000000000006px;top:475.88000000000005px" width="6" height="6"><circle cx="3" cy="3" r="2.75" fill="#62bc4e" stroke="#3a8a2a" stroke-width="0.4"/><rect x="1.5" y="2.45" width="3" height="1.1" fill="#eafbe0"/></svg>
<div class="t" style="left:43.75px;top:477.48px;font-size:4.8px;font-weight:bold;letter-spacing:0.14px;color:#111;clip-path:inset(-4px 0 -4px -4px);width:78.55px">Sites <span style="font-weight:normal;color:#333">(4)</span></div>
<div style="left:4.8px;top:482.165px;width:180px;height:7.435px;background:#e5e4e0"></div>
<div style="left:122px;top:482.165px;width:1px;height:7.435px;background:#c4c4c4"></div>
<div style="left:143px;top:482.165px;width:1px;height:7.435px;background:#c4c4c4"></div>
<div style="left:164px;top:482.165px;width:1px;height:7.435px;background:#c4c4c4"></div>
<svg style="left:28.5px;top:483.865px" width="5" height="5"><rect x="0.35" y="0.35" width="4.2" height="4" rx="0.7" fill="#f7f7f9" stroke="#bcc0cc" stroke-width="0.7"/><path d="M1.35 2.35 H3.55" stroke="#666" stroke-width="0.6"/><path d="M2.45 1.25 V3.45" stroke="#666" stroke-width="0.6"/></svg>
<svg style="left:34.900000000000006px;top:483.26500000000004px" width="6" height="6"><circle cx="1.9" cy="4.2" r="1.6" fill="#c81818"/><circle cx="3.1" cy="2.9" r="1.5" fill="#40a838"/><circle cx="4.3" cy="1.7" r="1.4" fill="#f09828"/><circle cx="3.8" cy="3.6" r="1" fill="#4a90d8"/></svg>
<div class="t" style="left:43.75px;top:484.865px;font-size:4.8px;font-weight:bold;letter-spacing:0.14px;color:#111;clip-path:inset(-4px 0 -4px -4px);width:78.55px">Technologies <span style="font-weight:normal;color:#333">(3)</span></div>
<div class="t" style="left:124px;top:484.865px;font-size:4.6px;color:#222">4</div>
<div style="left:185px;top:111.4px;width:7.8px;height:379px;background:#f0f0f0"></div>
<div style="left:185.8px;top:127.8px;width:6.6px;height:247.5px;background:#cdcdcd"></div>
<svg style="left:187px;top:123px" width="4" height="3"><path d="M0.3 2.5 L2 0.7 L3.7 2.5" fill="none" stroke="#333" stroke-width="0.7"/></svg>
<svg style="left:187px;top:484.5px" width="4" height="3"><path d="M0.3 0.5 L2 2.3 L3.7 0.5" fill="none" stroke="#333" stroke-width="0.7"/></svg>
<div class="t" style="left:202.6px;top:90.4px;font-size:5px;font-weight:bold;color:#111">Contents:</div>
<div class="t" style="left:224px;top:90.4px;font-size:4.75px;color:#666;filter:blur(1px)">AM2TZ_NonProd_VLAN_PeerB of type SDN_TransportZone</div>
<svg style="left:809.5px;top:87.5px" width="8" height="8"><path d="M1.8 4 L5.5 1.8 M1.8 4 L5.5 6.2" stroke="#f8f8f8" stroke-width="0.8"/><circle cx="1.8" cy="4" r="1.55" fill="#c49048"/><circle cx="5.5" cy="1.8" r="1.5" fill="#d0a030"/><circle cx="5.5" cy="6.2" r="1.55" fill="#cc9838"/></svg>
<svg style="left:824px;top:88px" width="8" height="8"><path d="M0.5 0.8 L7.3 0.8 L7.3 7.4Z" fill="#999" stroke="#555" stroke-width="0.8" stroke-linejoin="round"/></svg>
<div style="left:204px;top:99.5px;width:17px;height:8px;background:#ebebeb;border-top:0.6px solid #dcdcdc;border-right:0.6px solid #dcdcdc;border-left:0.6px solid #dcdcdc"></div>
<div class="t" style="left:206.4px;top:102.6px;font-size:4.6px;">Alarms</div>
<div style="left:221px;top:98.8px;width:25px;height:9.2px;background:#fff;border:0.6px solid #d8d8d8;border-bottom:none"></div>
<div class="t" style="left:223.8px;top:101.6px;font-size:4.6px;">Topology</div>
<div style="left:246px;top:99.5px;width:11.5px;height:8px;background:#ebebeb;border-top:0.6px solid #dcdcdc;border-right:0.6px solid #dcdcdc;border-left:0.6px solid #dcdcdc"></div>
<div class="t" style="left:248.4px;top:102.6px;font-size:4.6px;">List</div>
<div style="left:257.5px;top:99.5px;width:19.5px;height:8px;background:#ebebeb;border-top:0.6px solid #dcdcdc;border-right:0.6px solid #dcdcdc;border-left:0.6px solid #dcdcdc"></div>
<div class="t" style="left:259.9px;top:102.6px;font-size:4.6px;">Events</div>
<div style="left:277px;top:99.5px;width:29px;height:8px;background:#ebebeb;border-top:0.6px solid #dcdcdc;border-right:0.6px solid #dcdcdc;border-left:0.6px solid #dcdcdc"></div>
<div class="t" style="left:279.4px;top:102.6px;font-size:4.6px;">Information</div>
<div style="left:198px;top:107.3px;width:636px;height:1px;background:#fff"></div>
<svg style="left:0;top:0" width="834" height="130">
<path d="M206 112 H211 L213 114 V120.8 H206Z" fill="#c4c4c4" stroke="#8a8a8a" stroke-width="0.7"/><path d="M210.6 116.8 L213.4 118.6 L210.6 120.4Z" fill="#444"/>
<ellipse cx="225" cy="116" rx="4.6" ry="2.8" fill="#a8a8a8" stroke="#6a6a6a" stroke-width="0.7"/><ellipse cx="224" cy="115" rx="2.6" ry="1.2" fill="#d0d0d0"/><circle cx="228.3" cy="117.8" r="1.5" fill="#fff" stroke="#555" stroke-width="0.5"/>
<circle cx="239.6" cy="115.4" r="3" fill="#dcdcdc" stroke="#b4b4b4" stroke-width="0.6"/><circle cx="242" cy="118" r="1.6" fill="#f4f4f4" stroke="#aaa" stroke-width="0.5"/>
<path d="M251 115 H255 L253 117.3Z" fill="#888"/>
<circle cx="266.2" cy="116" r="4.2" fill="#d4d4d4" stroke="#5a5a5a" stroke-width="0.8"/><path d="M262.8 117.5 Q266 121 269.6 117.5" stroke="#f4f4f4" stroke-width="0.9" fill="none"/><path d="M265.4 117 L268.8 113.2 L266.6 117.6Z" fill="#222"/>
<circle cx="283.2" cy="115.3" r="3.4" fill="#c8c8c8" stroke="#6a6a6a" stroke-width="0.7"/><circle cx="282.3" cy="114.4" r="1.3" fill="#f0f0f0"/><rect x="281.7" y="118.6" width="3" height="2" fill="#8a8a8a"/>
<rect x="294" y="112" width="4.5" height="6" fill="#e4e4e4" stroke="#bbb" stroke-width="0.6"/><rect x="296" y="114" width="4.5" height="6" fill="#e4e4e4" stroke="#bbb" stroke-width="0.6"/>
<path d="M315.5 112 L311.5 118.3 M313 112.5 L314.5 118" stroke="#a8a8a8" stroke-width="0.8"/><circle cx="311" cy="119" r="1.2" fill="#b0b0b0"/><circle cx="314.8" cy="119" r="1.2" fill="#b0b0b0"/>
<rect x="326.2" y="113" width="6.5" height="7.5" fill="#d8d8d8" stroke="#b0b0b0" stroke-width="0.6"/><rect x="328" y="112" width="3" height="1.8" fill="#bbb"/><rect x="329.5" y="116.5" width="3.5" height="4" fill="#f0f0f0" stroke="#bbb" stroke-width="0.4"/>
<circle cx="344.5" cy="115.8" r="2.8" fill="#d4d4d4" stroke="#b0b0b0" stroke-width="0.6"/><ellipse cx="347" cy="118" rx="2.4" ry="1.6" fill="#dedede" stroke="#aaa" stroke-width="0.5"/>
<path d="M359.2 113.8 L363.6 118.6 M363.6 113.8 L359.2 118.6" stroke="#777" stroke-width="0.7"/>
<path d="M372.2 115.2 L376.5 113.2 L380.5 115.2 L376.2 117.2Z" fill="#c8c8c8" stroke="#777" stroke-width="0.5"/><path d="M372.2 115.2 V118.6 L376.2 120.6 V117.2Z" fill="#a0a0a0" stroke="#777" stroke-width="0.5"/><path d="M376.2 117.2 V120.6 L380.5 118.6 V115.2Z" fill="#dcdcdc" stroke="#777" stroke-width="0.5"/><path d="M377 112.2 L380.6 111.6 L380.4 114.4 L377.6 114.8Z" fill="#444"/>
<rect x="387.3" y="111.5" width="0.8" height="10" fill="#bbb"/>
<circle cx="442" cy="115" r="2.6" fill="#fff" stroke="#333" stroke-width="0.8"/><path d="M444 117 L446.5 119.5" stroke="#333" stroke-width="1.1"/>
<circle cx="457" cy="115" r="2.6" fill="#fff" stroke="#333" stroke-width="0.8"/><path d="M459 117 L461.5 119.5" stroke="#333" stroke-width="1.1"/><path d="M455.8 115 H458.2 M457 113.8 V116.2" stroke="#333" stroke-width="0.5"/>
</svg>
<div class="t" style="left:391.5px;top:113.8px;font-size:4.6px;font-weight:bold;color:#222">Zoom:</div>
<div style="left:406.4px;top:111.7px;width:26.30000000000001px;height:8.299999999999997px;background:#fff;border:0.8px solid #8a8a8a;border-right-color:#c8c8c8;border-bottom-color:#c8c8c8"></div>
<div class="t" style="left:407.9px;top:114.2px;font-size:4.6px;">100%</div>
<div style="left:426.3px;top:112.60000000000001px;width:5.6px;height:6.499999999999997px;background:#eeeeee;border-right:0.6px solid #909090;border-bottom:0.6px solid #909090"></div>
<svg style="left:427.7px;top:114.60000000000001px" width="4" height="3"><path d="M0 0.3 H3.2 L1.6 2.2Z" fill="#222"/></svg>
<div style="left:803px;top:113.4px;width:26.5px;height:4.8px;background:#e8e8e8;border:0.8px solid #bdbdbd;border-radius:2px"></div>
<div style="left:198px;top:122.3px;width:636px;height:0.8px;background:#fff"></div>
<div style="left:199.3px;top:123px;width:632.7px;height:231.5px;background:#2b4a6a"></div>
<svg style="left:0;top:0" width="834" height="360">
<defs>
<linearGradient id="gell" x1="0" y1="0" x2="0.3" y2="1"><stop offset="0" stop-color="#94d482"/><stop offset="1" stop-color="#6cba5a"/></linearGradient>
</defs>
<g stroke="#d8c47c" stroke-width="2.9" stroke-linecap="round">
<line x1="375" y1="167" x2="256" y2="251"/>
<line x1="375" y1="167" x2="340" y2="245"/>
<line x1="375" y1="167" x2="406" y2="239"/>
<line x1="375" y1="167" x2="489" y2="250"/>
</g>
<g stroke="#fbeeae" stroke-width="1.5" stroke-linecap="round">
<line x1="375" y1="167" x2="256" y2="251"/>
<line x1="375" y1="167" x2="340" y2="245"/>
<line x1="375" y1="167" x2="406" y2="239"/>
<line x1="375" y1="167" x2="489" y2="250"/>
</g>
<g transform="rotate(-12 376 165)">
<ellipse cx="376" cy="168.8" rx="28.6" ry="13.8" fill="#1e1e16"/>
<ellipse cx="376" cy="167.2" rx="28.6" ry="13.8" fill="#52a040"/>
<ellipse cx="376" cy="164.6" rx="28.4" ry="13.4" fill="url(#gell)"/>
</g>
<g stroke="#eaf6e0" stroke-width="0.55" fill="#f2faea">
<path d="M370 162 L381 158.5 L385 167 L374 170.5Z M370 162 L385 167 M381 158.5 L374 170.5" fill="none"/>
<rect x="368" y="160.3" width="3.6" height="3.2"/><rect x="379.2" y="156.9" width="3.6" height="3.2"/><rect x="383.2" y="165.3" width="3.6" height="3.2"/><rect x="372.2" y="168.8" width="3.6" height="3.2"/>
</g>
<g transform="translate(0 0)">
<path d="M234.5 256 L235.5 262 L241 268.6 L258.4 261.5 V257.5 L240 262Z" fill="#2a2420"/>
<path d="M233 242.5 L240 253.7 V262.5 L234.5 256.5Z" fill="#c4c4c0"/>
<path d="M240 253.7 L258.4 248.7 V257.8 L240 262.5Z" fill="#b2b2ae"/>
<path d="M233 242.5 L249 238.2 L258.4 248.7 L240 253.7Z" fill="#bebeba"/>
<path d="M233 242.5 L249 238.2 L258.4 248.7 L240 253.7Z M240 253.7 V262.5" fill="none" stroke="#dcdcd6" stroke-width="0.6"/>
</g><g transform="translate(87 0)">
<path d="M234.5 256 L235.5 262 L241 268.6 L258.4 261.5 V257.5 L240 262Z" fill="#2a2420"/>
<path d="M233 242.5 L240 253.7 V262.5 L234.5 256.5Z" fill="#c4c4c0"/>
<path d="M240 253.7 L258.4 248.7 V257.8 L240 262.5Z" fill="#b2b2ae"/>
<path d="M233 242.5 L249 238.2 L258.4 248.7 L240 253.7Z" fill="#bebeba"/>
<path d="M233 242.5 L249 238.2 L258.4 248.7 L240 253.7Z M240 253.7 V262.5" fill="none" stroke="#dcdcd6" stroke-width="0.6"/>
</g><g transform="translate(0 0)">
<path d="M400 240.3 L418.6 235.2 L427.4 245.3 V258.8 L409 265.5 L401 255Z" fill="none" stroke="#e8f0e8" stroke-width="1.2" stroke-linejoin="round"/>
<path d="M401.5 254 L402.5 259 L409 266.5 L426.6 259.6 V257.6 L409 263Z" fill="#221c18"/>
<path d="M401 241 L408.7 251.7 V263 L402 255Z" fill="#4e9e3c"/>
<path d="M408.7 251.7 L426.4 245.6 V257.8 L408.7 263Z" fill="#5eb24a"/>
<path d="M401 241 L418.5 236.2 L426.4 245.6 L408.7 251.7Z" fill="#78c862"/>
<path d="M407 242.5 Q412 240 414 243.5 Q416.5 247 421.5 244.5 M408.5 247 Q412.5 247.5 414 243.5 Q415.5 240 420 239.8" stroke="#eef6dc" stroke-width="1.1" fill="none" stroke-linecap="round"/>
</g><g transform="translate(87 0)">
<path d="M400 240.3 L418.6 235.2 L427.4 245.3 V258.8 L409 265.5 L401 255Z" fill="none" stroke="#e8f0e8" stroke-width="1.2" stroke-linejoin="round"/>
<path d="M401.5 254 L402.5 259 L409 266.5 L426.6 259.6 V257.6 L409 263Z" fill="#221c18"/>
<path d="M401 241 L408.7 251.7 V263 L402 255Z" fill="#4e9e3c"/>
<path d="M408.7 251.7 L426.4 245.6 V257.8 L408.7 263Z" fill="#5eb24a"/>
<path d="M401 241 L418.5 236.2 L426.4 245.6 L408.7 251.7Z" fill="#78c862"/>
<path d="M407 242.5 Q412 240 414 243.5 Q416.5 247 421.5 244.5 M408.5 247 Q412.5 247.5 414 243.5 Q415.5 240 420 239.8" stroke="#eef6dc" stroke-width="1.1" fill="none" stroke-linecap="round"/>
</g></svg>
<div style="left:344.2px;top:181.5px;width:45.60000000000002px;height:19.0px;background:rgba(198,204,214,0.84);border:0.7px solid rgba(220,224,230,0.95);border-radius:2px"></div>
<div class="t" style="left:346.5px;top:187.9px;font-size:4.6px;color:#111">AM2TZ_NonProd...</div>
<div class="t" style="left:346.5px;top:192.8px;font-size:4.6px;color:#111">SDN_TransportZ</div>
<div style="left:226.5px;top:265.6px;width:46.5px;height:19.399999999999977px;background:rgba(198,204,214,0.84);border:0.7px solid rgba(220,224,230,0.95);border-radius:2px"></div>
<div class="t" style="left:228.8px;top:272.0px;font-size:4.6px;color:#111">tagsedgenode02</div>
<div class="t" style="left:228.8px;top:276.90000000000003px;font-size:4.6px;color:#111">SDN_VM</div>
<div style="left:313px;top:265.6px;width:46.5px;height:19.399999999999977px;background:rgba(198,204,214,0.84);border:0.7px solid rgba(220,224,230,0.95);border-radius:2px"></div>
<div class="t" style="left:315.3px;top:272.0px;font-size:4.6px;color:#111">tagsedgenode01</div>
<div class="t" style="left:315.3px;top:276.90000000000003px;font-size:4.6px;color:#111">SDN_VM</div>
<div style="left:396px;top:263.9px;width:46.39999999999998px;height:19.400000000000034px;background:rgba(198,204,214,0.84);border:0.7px solid rgba(220,224,230,0.95);border-radius:2px"></div>
<div class="t" style="left:398.3px;top:270.29999999999995px;font-size:4.6px;color:#111">Uplink_BGP_Peer...</div>
<div class="t" style="left:398.3px;top:275.2px;font-size:4.6px;color:#111">VSwitch</div>
<div style="left:483px;top:263.9px;width:46.5px;height:19.400000000000034px;background:rgba(198,204,214,0.84);border:0.7px solid rgba(220,224,230,0.95);border-radius:2px"></div>
<div class="t" style="left:485.3px;top:270.29999999999995px;font-size:4.6px;color:#111">test2</div>
<div class="t" style="left:485.3px;top:275.2px;font-size:4.6px;color:#111">VSwitch</div>
<div class="t" style="left:202.6px;top:364.8px;font-size:5px;font-weight:bold;color:#111">Component Detail:</div>
<div class="t" style="left:247.5px;top:364.8px;font-size:4.7px;color:#666;filter:blur(1px)">AM2TZ_NonProd_VLAN_PeerB of type SDN_TransportZone</div>
<svg style="left:809px;top:362.3px" width="8" height="8"><path d="M1.8 4 L5.5 1.8 M1.8 4 L5.5 6.2" stroke="#f8f8f8" stroke-width="0.8"/><circle cx="1.8" cy="4" r="1.55" fill="#c49048"/><circle cx="5.5" cy="1.8" r="1.5" fill="#d0a030"/><circle cx="5.5" cy="6.2" r="1.55" fill="#cc9838"/></svg>
<svg style="left:824px;top:363px" width="8" height="8"><path d="M0.5 0.8 L7.3 0.8 L7.3 7.4Z" fill="#999" stroke="#555" stroke-width="0.8" stroke-linejoin="round"/></svg>
<div style="left:203.6px;top:374.5px;width:28.599999999999994px;height:7px;background:#ececec;border:0.6px solid #dcdcdc;border-bottom:none"></div>
<div class="t" style="left:205.6px;top:377.1px;font-size:4.5px;color:#111">Information</div>
<div style="left:232.2px;top:374.5px;width:43.80000000000001px;height:7px;background:#ececec;border:0.6px solid #dcdcdc;border-bottom:none"></div>
<div class="t" style="left:234.2px;top:377.1px;font-size:4.5px;color:#aaa">Host Configuration</div>
<div style="left:276px;top:374.5px;width:29px;height:7px;background:#ececec;border:0.6px solid #dcdcdc;border-bottom:none"></div>
<div class="t" style="left:278px;top:377.1px;font-size:4.5px;color:#aaa">Root Cause</div>
<div style="left:305px;top:374.5px;width:27px;height:7px;background:#ececec;border:0.6px solid #dcdcdc;border-bottom:none"></div>
<div class="t" style="left:307px;top:377.1px;font-size:4.5px;color:#aaa">Interfaces</div>
<div style="left:332px;top:374.5px;width:30px;height:7px;background:#ececec;border:0.6px solid #dcdcdc;border-bottom:none"></div>
<div class="t" style="left:334px;top:377.1px;font-size:4.5px;color:#aaa">Performance</div>
<div style="left:362px;top:374.5px;width:27px;height:7px;background:#ececec;border:0.6px solid #dcdcdc;border-bottom:none"></div>
<div class="t" style="left:364px;top:377.1px;font-size:4.5px;color:#aaa">Neighbors</div>
<div style="left:389px;top:374.5px;width:18px;height:7px;background:#ececec;border:0.6px solid #dcdcdc;border-bottom:none"></div>
<div class="t" style="left:391px;top:377.1px;font-size:4.5px;color:#111">Alarms</div>
<div style="left:407px;top:374.5px;width:53.80000000000001px;height:7px;background:#ececec;border:0.6px solid #dcdcdc;border-bottom:none"></div>
<div class="t" style="left:409px;top:377.1px;font-size:4.5px;color:#111">Cleared Alarms History</div>
<div style="left:460.8px;top:374.5px;width:18.19999999999999px;height:7px;background:#ececec;border:0.6px solid #dcdcdc;border-bottom:none"></div>
<div class="t" style="left:462.8px;top:377.1px;font-size:4.5px;color:#111">Events</div>
<div style="left:479px;top:373.4px;width:26px;height:8.3px;background:#fff;border:0.6px solid #d8d8d8;border-bottom:none"></div>
<div class="t" style="left:481px;top:376.2px;font-size:4.5px;color:#111">Attributes</div>
<div style="left:505px;top:374.5px;width:25px;height:7px;background:#ececec;border:0.6px solid #dcdcdc;border-bottom:none"></div>
<div class="t" style="left:507px;top:377.1px;font-size:4.5px;color:#aaa">Path View</div>
<div style="left:530px;top:374.5px;width:45px;height:7px;background:#ececec;border:0.6px solid #dcdcdc;border-bottom:none"></div>
<div class="t" style="left:532px;top:377.1px;font-size:4.5px;color:#aaa">SDN VirtualOverlay</div>
<div style="left:575px;top:374.5px;width:39px;height:7px;background:#ececec;border:0.6px solid #dcdcdc;border-bottom:none"></div>
<div class="t" style="left:577px;top:377.1px;font-size:4.5px;color:#aaa">SDN ServiceView</div>
<div style="left:198px;top:381.5px;width:636px;height:0.8px;background:#fff"></div>
<svg style="left:0;top:0" width="834" height="400">
<path d="M207.5 388.5 L212.5 390.8 L207.5 393Z" fill="#ddd" stroke="#aaa" stroke-width="0.6"/>
<path d="M224.6 390.3 Q225.5 388 228.3 388.6 M229.4 392.2 Q228.5 394.6 225.7 394" stroke="#222" stroke-width="1.1" fill="none"/><path d="M227.3 387.3 L229.9 388.9 L227.4 390.4Z M226.7 395.3 L224.1 393.7 L226.6 392.2Z" fill="#222"/>
<path d="M236.5 389 L241 387 L244.5 389 L240 391Z" fill="#bbb" stroke="#777" stroke-width="0.5"/><path d="M236.5 389 V392.5 L240 394.5 V391Z" fill="#999" stroke="#777" stroke-width="0.5"/><path d="M240 391 V394.5 L244.5 392.5 V389Z" fill="#ddd" stroke="#777" stroke-width="0.5"/>
<path d="M522.8 390.3 Q523.7 388 526.5 388.6 M527.6 392.2 Q526.7 394.6 523.9 394" stroke="#777" stroke-width="1" fill="none"/><path d="M525.5 387.3 L528.1 388.9 L525.6 390.4Z M524.9 395.3 L522.3 393.7 L524.8 392.2Z" fill="#777"/>
<path d="M538.5 387.3 H543 L545 389.3 V395.3 H538.5Z" fill="#d8d8d8" stroke="#c0c0c0" stroke-width="0.6"/>
<path d="M562 388.5 L557.5 390.8 L562 393Z" fill="#eee" stroke="#aaa" stroke-width="0.6"/>
<path d="M570.5 389 L575 387 L578.5 389 L574 391Z" fill="#ccc" stroke="#999" stroke-width="0.5"/><path d="M570.5 389 V392.5 L574 394.5 V391Z" fill="#aaa" stroke="#999" stroke-width="0.5"/><path d="M574 391 V394.5 L578.5 392.5 V389Z" fill="#e4e4e4" stroke="#999" stroke-width="0.5"/>
</svg>
<div style="left:247.3px;top:386.9px;width:28.099999999999966px;height:7.5px;background:#fff;border:0.8px solid #8a8a8a;border-right-color:#c8c8c8;border-bottom-color:#c8c8c8"></div>
<div class="t" style="left:248.8px;top:389.4px;font-size:4.6px;">Show</div>
<div style="left:269.0px;top:387.79999999999995px;width:5.6px;height:5.7px;background:#eeeeee;border-right:0.6px solid #909090;border-bottom:0.6px solid #909090"></div>
<svg style="left:270.4px;top:389.79999999999995px" width="4" height="3"><path d="M0 0.3 H3.2 L1.6 2.2Z" fill="#222"/></svg>
<div style="left:278px;top:386.3px;width:160.6px;height:9.7px;background:#fff;border:0.7px solid #c4c4c4"></div>
<div class="t" style="left:440.8px;top:389px;font-size:4.5px;">Displaying 288 of 288</div>
<div style="left:488.3px;top:388px;width:25.4px;height:5px;background:#e4e4e4;border:0.6px solid #d0d0d0"></div>
<div style="left:515px;top:383.5px;width:2.2px;height:91px;background:#2c2c30"></div>
<div style="left:199px;top:399px;width:315px;height:75px;background:#fcfcfc"></div>
<div style="left:200px;top:400px;width:307px;height:8px;background:#efefef;border-bottom:0.9px solid #9a9a9a"></div>
<div style="left:345.1px;top:400px;width:0.8px;height:8px;background:#a0a0a0"></div>
<div style="left:426.1px;top:400px;width:0.8px;height:8px;background:#a0a0a0"></div>
<div style="left:506.8px;top:400px;width:0.8px;height:8px;background:#a0a0a0"></div>
<div class="t" style="left:201px;top:402.1px;font-size:4.5px;">Name</div>
<svg style="left:215px;top:402.3px" width="4" height="3"><path d="M0.3 2.5 L2 0.7 L3.7 2.5" fill="none" stroke="#333" stroke-width="0.7"/></svg>
<div class="t" style="left:346.8px;top:402.1px;font-size:4.5px;">ID</div>
<div class="t" style="left:427.8px;top:402.1px;font-size:4.5px;">Type</div>
<div style="left:200px;top:408.0px;width:307px;height:6.05px;background:#fcfcfc"></div>
<div class="t" style="left:201px;top:409.8px;font-size:4.5px;">Acknowledged</div>
<div class="t" style="left:346.5px;top:409.8px;font-size:4.5px;">0x1134e</div>
<div class="t" style="left:427.5px;top:409.8px;font-size:4.5px;">Boolean</div>
<div style="left:200px;top:414.0px;width:307px;height:6.05px;background:#e5e4e0"></div>
<div class="t" style="left:201px;top:415.8px;font-size:4.5px;">Activation_Status</div>
<div class="t" style="left:346.5px;top:415.8px;font-size:4.5px;">0x10073</div>
<div class="t" style="left:427.5px;top:415.8px;font-size:4.5px;">Integer</div>
<div style="left:200px;top:420.0px;width:307px;height:6.05px;background:#fcfcfc"></div>
<div class="t" style="left:201px;top:421.8px;font-size:4.5px;">AddressDsMethods</div>
<div class="t" style="left:346.5px;top:421.8px;font-size:4.5px;">0x11972</div>
<div class="t" style="left:427.5px;top:421.8px;font-size:4.5px;">Text String</div>
<div style="left:200px;top:426.0px;width:307px;height:6.05px;background:#e5e4e0"></div>
<div class="t" style="left:201px;top:427.8px;font-size:4.5px;">AlarmFromRollup</div>
<div class="t" style="left:346.5px;top:427.8px;font-size:4.5px;">0x11ace</div>
<div class="t" style="left:427.5px;top:427.8px;font-size:4.5px;">Boolean</div>
<div style="left:200px;top:432.0px;width:307px;height:6.05px;background:#fcfcfc"></div>
<div class="t" style="left:201px;top:433.8px;font-size:4.5px;">AllowCreateDestroy</div>
<div class="t" style="left:346.5px;top:433.8px;font-size:4.5px;">0x12aa4</div>
<div class="t" style="left:427.5px;top:433.8px;font-size:4.5px;">Boolean</div>
<div style="left:200px;top:438.0px;width:307px;height:6.05px;background:#e5e4e0"></div>
<div class="t" style="left:201px;top:439.8px;font-size:4.5px;">AllowEditContent</div>
<div class="t" style="left:346.5px;top:439.8px;font-size:4.5px;">0x12aa5</div>
<div class="t" style="left:427.5px;top:439.8px;font-size:4.5px;">Boolean</div>
<div style="left:200px;top:444.0px;width:307px;height:6.05px;background:#fcfcfc"></div>
<div class="t" style="left:201px;top:445.8px;font-size:4.5px;">AllowEditLayout</div>
<div class="t" style="left:346.5px;top:445.8px;font-size:4.5px;">0x12aa6</div>
<div class="t" style="left:427.5px;top:445.8px;font-size:4.5px;">Boolean</div>
<div style="left:200px;top:450.0px;width:307px;height:6.05px;background:#e5e4e0"></div>
<div class="t" style="left:201px;top:451.8px;font-size:4.5px;">AllowViewPath</div>
<div class="t" style="left:346.5px;top:451.8px;font-size:4.5px;">0x112c1</div>
<div class="t" style="left:427.5px;top:451.8px;font-size:4.5px;">Boolean</div>
<div style="left:200px;top:456.0px;width:307px;height:6.05px;background:#fcfcfc"></div>
<div class="t" style="left:201px;top:457.8px;font-size:4.5px;">AutoMap</div>
<div class="t" style="left:346.5px;top:457.8px;font-size:4.5px;">0x11a50</div>
<div class="t" style="left:427.5px;top:457.8px;font-size:4.5px;">Integer</div>
<div style="left:200px;top:462.0px;width:307px;height:6.05px;background:#e5e4e0"></div>
<div class="t" style="left:201px;top:463.8px;font-size:4.5px;">AutoPlace</div>
<div class="t" style="left:346.5px;top:463.8px;font-size:4.5px;">0x12a92</div>
<div class="t" style="left:427.5px;top:463.8px;font-size:4.5px;">Integer</div>
<div style="left:200px;top:468.0px;width:307px;height:6.05px;background:#fcfcfc"></div>
<div class="t" style="left:201px;top:469.8px;font-size:4.5px;">AutoPlace</div>
<div class="t" style="left:346.5px;top:469.8px;font-size:4.5px;">0x11a51</div>
<div class="t" style="left:427.5px;top:469.8px;font-size:4.5px;">Integer</div>
<div style="left:199px;top:399px;width:315px;height:1px;background:#a8a8a8"></div>
<div style="left:199px;top:399px;width:1px;height:75px;background:#a8a8a8"></div>
<div style="left:199px;top:474px;width:315px;height:1px;background:#a0a0a0"></div>
<div style="left:514px;top:399px;width:1px;height:75px;background:#d0d0d0"></div>
<div style="left:507px;top:408px;width:7px;height:66px;background:#f0f0f0"></div>
<div style="left:507.8px;top:415.2px;width:5.6px;height:4.4px;background:#d0d0d0"></div>
<svg style="left:509px;top:410.5px" width="4" height="3"><path d="M0.3 2.5 L2 0.7 L3.7 2.5" fill="none" stroke="#333" stroke-width="0.7"/></svg>
<svg style="left:509px;top:469px" width="4" height="3"><path d="M0.3 0.5 L2 2.3 L3.7 0.5" fill="none" stroke="#333" stroke-width="0.7"/></svg>
<div style="left:580.6px;top:386.9px;width:29.100000000000023px;height:7.5px;background:#fff;border:0.8px solid #8a8a8a;border-right-color:#c8c8c8;border-bottom-color:#c8c8c8"></div>
<div class="t" style="left:582.1px;top:389.4px;font-size:4.6px;">Show</div>
<div style="left:603.3000000000001px;top:387.79999999999995px;width:5.6px;height:5.7px;background:#eeeeee;border-right:0.6px solid #909090;border-bottom:0.6px solid #909090"></div>
<svg style="left:604.7px;top:389.79999999999995px" width="4" height="3"><path d="M0 0.3 H3.2 L1.6 2.2Z" fill="#222"/></svg>
<div style="left:612.3px;top:385.6px;width:153.7px;height:10.4px;background:#fff;border:0.7px solid #c4c4c4"></div>
<div class="t" style="left:767.8px;top:388.6px;font-size:4.5px;">Displaying 0 of 0</div>
<div style="left:805.4px;top:388px;width:26.1px;height:5px;background:#e4e4e4;border:0.6px solid #d0d0d0"></div>
<div style="left:517.5px;top:399px;width:314.5px;height:75.5px;background:#f9f9f6;border-bottom:0.8px solid #a0a0a0;border-right:0.6px solid #ccc"></div>
<div style="left:518px;top:399.6px;width:313.5px;height:7px;background:#ececec"></div>
<div style="left:518px;top:399.6px;width:175px;height:7px;background:#efefef;border:0.7px solid #a0a0a0"></div>
<div style="left:582.4px;top:399.6px;width:0.8px;height:7px;background:#a0a0a0"></div>
<div class="t" style="left:519.5px;top:401.4px;font-size:4.2px;">Name</div>
<div class="t" style="left:584px;top:401.4px;font-size:4.2px;">Value</div>
<div style="left:199.3px;top:475.8px;width:632px;height:13px;border:0.6px solid #d8d8d8;border-right:none"></div>
<div class="t" style="left:202.5px;top:481px;font-size:4.6px;font-weight:bold;color:#111">Flags:</div>
<div class="t" style="left:217.8px;top:481px;font-size:4.6px;color:#999">Database&nbsp; Memory&nbsp; Readable&nbsp; Writable&nbsp; External&nbsp; Polled&nbsp; Logged&nbsp; Shared&nbsp; Global</div>
<div class="t" style="left:418.6px;top:481.2px;font-size:4.8px;color:#111;-webkit-text-stroke:0.2px #111">Instance ID</div>
<div style="left:445.1px;top:478.4px;width:384.4px;height:8.4px;background:#fff;border:0.7px solid #c8c8c8"></div>
</body></html>
